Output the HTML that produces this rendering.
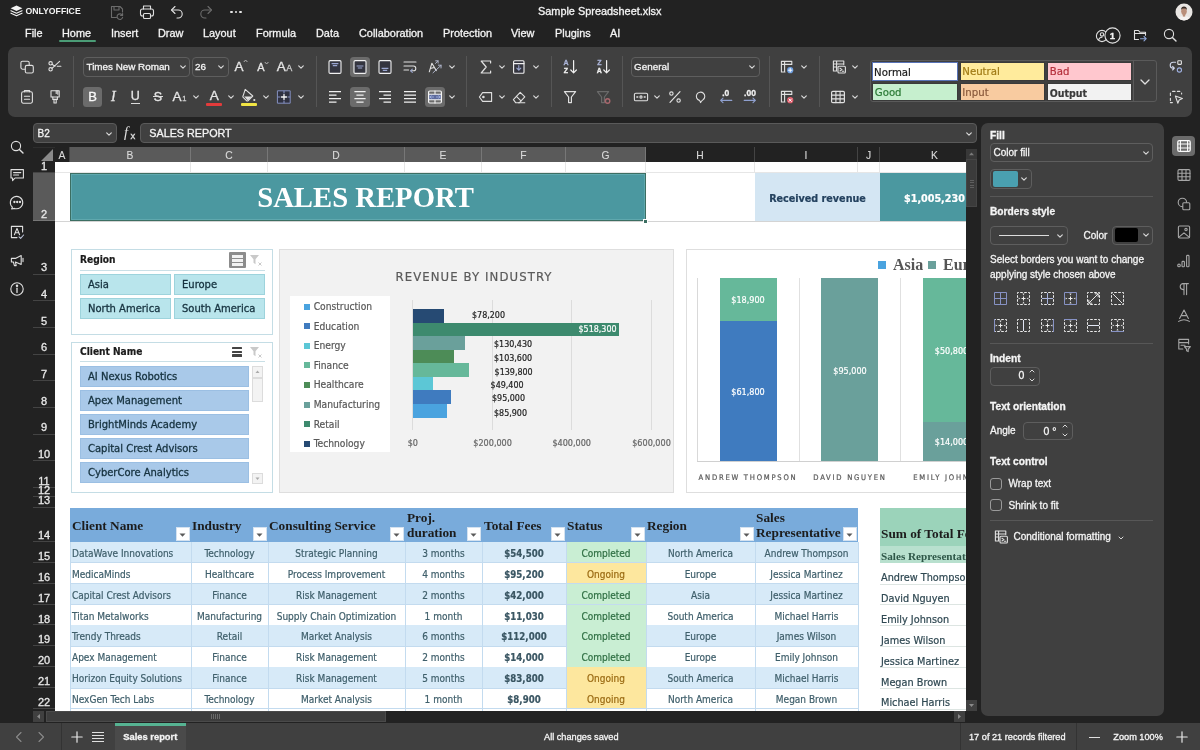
<!DOCTYPE html><html><head><meta charset="utf-8"><title>Sample Spreadsheet.xlsx</title><style>
*{box-sizing:border-box;margin:0;padding:0}
html,body{width:1200px;height:750px;overflow:hidden;background:#222;font-family:"Liberation Sans",sans-serif;color:#e6e6e6;font-size:11px}
.a{position:absolute}
.ui{font-family:"Liberation Sans",sans-serif;color:#ececec;white-space:nowrap;font-size:11px;-webkit-text-stroke:0.3px}
.sh{font-family:"DejaVu Sans Condensed","DejaVu Sans",sans-serif;white-space:nowrap;color:#3f5f6b;font-size:10px;-webkit-text-stroke:0.2px}
.sf{font-family:"Liberation Serif",serif;white-space:nowrap;font-weight:bold;color:#1c1c1c}
.c{text-align:center}
svg{position:absolute;overflow:visible}
.ic{stroke:#e0e0e0;fill:none;stroke-width:1.1;stroke-linecap:round;stroke-linejoin:round}
#root{position:absolute;left:0;top:0;width:1200px;height:750px;will-change:transform}
#sheet{position:absolute;left:0;top:0;width:966px;height:711px;overflow:hidden}
</style></head><body><div id="root">
<svg style="left:10px;top:5px" width="13" height="12" viewBox="0 0 13 12"><path d="M6.5 0.6L12.4 3.3L6.5 6L0.6 3.3Z" fill="#f2f2f2"/><path d="M1 5.7L6.5 8.2L12 5.7M1 8.2L6.5 10.8L12 8.2" fill="none" stroke="#f2f2f2" stroke-width="1.2" stroke-linejoin="round" stroke-linecap="round"/></svg>
<div class="a ui" style="left:25.5px;top:6px;font-size:8.7px;font-weight:bold;color:#f4f4f4;line-height:11px;-webkit-text-stroke:0">ONLYOFFICE</div>
<svg class="ic" style="left:107.0px;top:1.5px;" width="20" height="20" viewBox="0 0 20 20"><g stroke="#6c6c6c"><path d="M4.5 4.5h8.5l2.5 2.5v3M4.5 4.5v11h5"/><path d="M7 4.5v3.5h5v-3.5"/><path d="M15.3 13.2a2.8 2.8 0 1 0 .3 2.2M15.6 11.5v2h-2"/></g></svg>
<svg class="ic" style="left:137.0px;top:1.5px;" width="20" height="20" viewBox="0 0 20 20"><rect x="3.5" y="7" width="13" height="7" rx="2"/><path d="M6.5 7v-3h7v3"/><rect x="6.5" y="11.5" width="7" height="5" rx="1" fill="#222"/></svg>
<svg class="ic" style="left:167.0px;top:1.5px;" width="20" height="20" viewBox="0 0 20 20"><path d="M8 4.5L4.5 8L8 11.5"/><path d="M4.8 8h6.4a4 4 0 0 1 0 8h-1.2"/></svg>
<svg class="ic" style="left:196.0px;top:1.5px;" width="20" height="20" viewBox="0 0 20 20"><g stroke="#6c6c6c"><path d="M12 4.5L15.5 8L12 11.5"/><path d="M15.2 8h-6.4a4 4 0 0 0 0 8h1.2"/></g></svg>
<div class="a" style="left:230.3px;top:10.6px;width:2.4px;height:2.4px;background:#e6e6e6;border-radius:1.2px"></div>
<div class="a" style="left:234.8px;top:10.6px;width:2.4px;height:2.4px;background:#e6e6e6;border-radius:1.2px"></div>
<div class="a" style="left:239.3px;top:10.6px;width:2.4px;height:2.4px;background:#e6e6e6;border-radius:1.2px"></div>
<div class="a ui" style="left:538px;top:5px;font-size:10.9px;color:#f4f4f4;line-height:13px">Sample Spreadsheet.xlsx</div>
<svg style="left:1174.5px;top:3px" width="18" height="18" viewBox="0 0 18 18"><defs><clipPath id="av"><circle cx="9" cy="9" r="8.5"/></clipPath></defs><circle cx="9" cy="9" r="8.5" fill="#e9e6e3"/><g clip-path="url(#av)"><path d="M3 18c0-4 2.5-5 6-5s6 1 6 5z" fill="#f4f2f0"/><ellipse cx="9" cy="8.3" rx="2.8" ry="3.6" fill="#b98f7a"/><path d="M6 7.2c0-3 1.4-3.8 3-3.8s3 .8 3 3.8c-.6-1.2-1.6-1.6-3-1.6s-2.4.4-3 1.6z" fill="#3a2c26"/><rect x="7.8" y="11" width="2.4" height="2.6" fill="#b98f7a"/></g></svg>
<div class="a ui" style="left:25px;top:26.5px;font-size:10.9px;color:#f4f4f4;line-height:13px">File</div>
<div class="a ui" style="left:62px;top:26.5px;font-size:10.9px;color:#f4f4f4;line-height:13px">Home</div>
<div class="a ui" style="left:111px;top:26.5px;font-size:10.9px;color:#f4f4f4;line-height:13px">Insert</div>
<div class="a ui" style="left:158px;top:26.5px;font-size:10.9px;color:#f4f4f4;line-height:13px">Draw</div>
<div class="a ui" style="left:203px;top:26.5px;font-size:10.9px;color:#f4f4f4;line-height:13px">Layout</div>
<div class="a ui" style="left:256px;top:26.5px;font-size:10.9px;color:#f4f4f4;line-height:13px">Formula</div>
<div class="a ui" style="left:316px;top:26.5px;font-size:10.9px;color:#f4f4f4;line-height:13px">Data</div>
<div class="a ui" style="left:359px;top:26.5px;font-size:10.9px;color:#f4f4f4;line-height:13px">Collaboration</div>
<div class="a ui" style="left:443px;top:26.5px;font-size:10.9px;color:#f4f4f4;line-height:13px">Protection</div>
<div class="a ui" style="left:511px;top:26.5px;font-size:10.9px;color:#f4f4f4;line-height:13px">View</div>
<div class="a ui" style="left:555px;top:26.5px;font-size:10.9px;color:#f4f4f4;line-height:13px">Plugins</div>
<div class="a ui" style="left:610px;top:26.5px;font-size:10.9px;color:#f4f4f4;line-height:13px">AI</div>
<div class="a" style="left:58.5px;top:40.2px;width:37px;height:2px;background:#4b9c76;border-radius:1px"></div>
<svg class="ic" style="left:1091.5px;top:25.5px;" width="20" height="20" viewBox="0 0 20 20"><circle cx="10" cy="10" r="5.6"/><circle cx="10" cy="8.4" r="1.7"/><path d="M6.6 13.8c.6-2 2-2.6 3.4-2.6"/></svg>
<svg style="left:1104px;top:27px" width="17" height="17"><circle cx="8.5" cy="8.5" r="7.6" fill="#222" stroke="#e2e2e2" stroke-width="1.1"/></svg>
<div class="a ui c" style="left:1097.3px;top:25.5px;width:30px;height:20px;line-height:20px;font-size:9.5px;font-weight:bold;color:#f0f0f0">1</div>
<svg class="ic" style="left:1130.0px;top:25.0px;" width="20" height="20" viewBox="0 0 20 20"><path d="M4.5 14.5v-9h4l1.5 1.8h5.5v3"/><path d="M4.5 8.5h11"/><path d="M4.5 14.5h4"/><path d="M10.5 13.7h5.5m-2-2.2l2.2 2.2l-2.2 2.2" stroke="#8fa6d8"/></svg>
<svg class="ic" style="left:1159.5px;top:24.5px;" width="20" height="20" viewBox="0 0 20 20"><circle cx="9" cy="9" r="4.6"/><path d="M12.4 12.4L16 16" stroke-width="1.4"/></svg>
<div class="a" style="left:8px;top:47px;width:1184px;height:70px;background:#404040;border-radius:7px"></div>
<svg class="ic" style="left:16.7px;top:56.599999999999994px;" width="20" height="20" viewBox="0 0 20 20"><rect x="3.9" y="4.2" width="8.3" height="8" rx="1.6"/><rect x="8.3" y="8.4" width="8" height="7.6" rx="1.6" fill="#404040"/></svg>
<svg class="ic" style="left:45.3px;top:56.3px;" width="20" height="20" viewBox="0 0 20 20"><circle cx="5.6" cy="7.3" r="1.7"/><circle cx="5.6" cy="13.3" r="1.7"/><path d="M7 8.3L10 10.2M7 12.3L14.6 5.4M12.3 10.3h3.6"/></svg>
<svg class="ic" style="left:16.5px;top:86.7px;" width="20" height="20" viewBox="0 0 20 20"><rect x="4.6" y="4.8" width="10.8" height="11.4" rx="1.6"/><path d="M7.4 4.8v-1.3h5.2v1.3" /><path d="M7.4 9.3h5.2M7.4 12.3h5.2"/></svg>
<svg class="ic" style="left:44.7px;top:86.5px;" width="20" height="20" viewBox="0 0 20 20"><path d="M6 3.8h8.2v6.2h-8.2z"/><path d="M11.2 3.8v2.6M12.8 3.8v3.4"/><path d="M7.8 10v2.4h4.6v-2.4"/><path d="M9 12.4v3.6h2.2v-3.6"/></svg>
<div class="a" style="left:72.8px;top:56px;width:1px;height:51px;background:#555"></div>
<div class="a" style="left:82.5px;top:57px;width:107px;height:19.5px;border:1px solid #5e5e5e;border-radius:4px"></div>
<div class="a ui" style="left:86.5px;top:60px;font-size:9.85px;line-height:13px;color:#f4f4f4">Times New Roman</div>
<svg style="left:177.7px;top:61.7px" width="10" height="10" viewBox="0 0 10 10"><path d="M2.7 3.85L5 6.15L7.3 3.85" fill="none" stroke="#d8d8d8" stroke-width="1.2" stroke-linecap="round" stroke-linejoin="round"/></svg>
<div class="a" style="left:192px;top:57px;width:37px;height:19.5px;border:1px solid #5e5e5e;border-radius:4px"></div>
<div class="a ui" style="left:195px;top:60px;font-size:9.9px;line-height:13px;color:#f4f4f4">26</div>
<svg style="left:216.3px;top:61.7px" width="10" height="10" viewBox="0 0 10 10"><path d="M2.7 3.85L5 6.15L7.3 3.85" fill="none" stroke="#d8d8d8" stroke-width="1.2" stroke-linecap="round" stroke-linejoin="round"/></svg>
<div class="a ui c" style="left:224px;top:56.5px;width:30px;height:20px;line-height:20px;font-size:13.5px;color:#e6e6e6">A</div>
<svg style="left:242.5px;top:59px" width="6" height="4"><path d="M0.8 3L2.6 1L4.4 3" fill="none" stroke="#bdbdbd" stroke-width="0.9"/></svg>
<div class="a ui c" style="left:246px;top:57.3px;width:30px;height:20px;line-height:20px;font-size:11px;color:#e6e6e6">A</div>
<svg style="left:263.5px;top:60.5px" width="6" height="4"><path d="M0.8 1L2.6 3L4.4 1" fill="none" stroke="#bdbdbd" stroke-width="0.9"/></svg>
<div class="a ui c" style="left:266.3px;top:56.5px;width:30px;height:20px;line-height:20px;font-size:13.5px;color:#e6e6e6">A</div>
<div class="a ui c" style="left:274.3px;top:58px;width:30px;height:20px;line-height:20px;font-size:9px;color:#cfcfcf">A</div>
<svg style="left:295.7px;top:61.7px" width="10" height="10" viewBox="0 0 10 10"><path d="M2.7 3.85L5 6.15L7.3 3.85" fill="none" stroke="#d8d8d8" stroke-width="1.2" stroke-linecap="round" stroke-linejoin="round"/></svg>
<div class="a" style="left:82.7px;top:86.6px;width:19.8px;height:20px;background:#6b6b6b;border-radius:3.5px"></div>
<div class="a ui c" style="left:77.6px;top:86.7px;width:30px;height:20px;line-height:20px;font-size:13px;color:#fafafa">B</div>
<div class="a ui c" style="left:98.3px;top:86.5px;width:30px;height:20px;line-height:20px;font-size:14px;font-style:italic;font-family:'Liberation Serif',serif;color:#e6e6e6">I</div>
<div class="a ui c" style="left:120.30000000000001px;top:86px;width:30px;height:20px;line-height:20px;font-size:12.5px;color:#e6e6e6">U</div>
<div class="a" style="left:131px;top:103.2px;width:8.6px;height:1px;background:#dcdcdc"></div>
<div class="a ui c" style="left:143px;top:86.5px;width:30px;height:20px;line-height:20px;font-size:12.5px;color:#e6e6e6">S</div>
<div class="a" style="left:152.6px;top:96.3px;width:10.8px;height:1px;background:#dcdcdc"></div>
<div class="a ui c" style="left:162px;top:86.5px;width:30px;height:20px;line-height:20px;font-size:13.5px;color:#e6e6e6">A</div>
<div class="a ui c" style="left:169.3px;top:89px;width:30px;height:20px;line-height:20px;font-size:7.5px;color:#cfcfcf">1</div>
<svg style="left:190.7px;top:91.7px" width="10" height="10" viewBox="0 0 10 10"><path d="M2.7 3.85L5 6.15L7.3 3.85" fill="none" stroke="#d8d8d8" stroke-width="1.2" stroke-linecap="round" stroke-linejoin="round"/></svg>
<div class="a ui c" style="left:199.3px;top:86.4px;width:30px;height:20px;line-height:20px;font-size:13.5px;color:#e6e6e6">A</div>
<div class="a" style="left:206px;top:103.4px;width:16px;height:2.8px;background:#e23b3b;border-radius:1px"></div>
<svg style="left:225.7px;top:91.7px" width="10" height="10" viewBox="0 0 10 10"><path d="M2.7 3.85L5 6.15L7.3 3.85" fill="none" stroke="#d8d8d8" stroke-width="1.2" stroke-linecap="round" stroke-linejoin="round"/></svg>
<svg class="ic" style="left:238.7px;top:85.5px;" width="20" height="20" viewBox="0 0 20 20"><path d="M6.2 3.4l7.6 6.6l-4.6 4.6a1.2 1.2 0 0 1-1.7 0l-3.3-3.3a1.2 1.2 0 0 1 0-1.7z"/><path d="M5.2 10.6h7.6l-4 4z" fill="#e2e2e2" stroke="none"/><circle cx="15.3" cy="14" r="1.1" fill="#e2e2e2" stroke="none"/></svg>
<div class="a" style="left:241.3px;top:103.4px;width:15.8px;height:2.8px;background:#f1e443;border-radius:1px"></div>
<svg style="left:260.6px;top:91.7px" width="10" height="10" viewBox="0 0 10 10"><path d="M2.7 3.85L5 6.15L7.3 3.85" fill="none" stroke="#d8d8d8" stroke-width="1.2" stroke-linecap="round" stroke-linejoin="round"/></svg>
<svg class="ic" style="left:273.7px;top:86.5px;" width="20" height="20" viewBox="0 0 20 20"><rect x="3.8" y="3.8" width="12.4" height="12.4" stroke="#8490c0" stroke-width="1" fill="#2f3140"/><path d="M10 3.8v2.4M10 13.800v2.400M3.800 10h2.400M13.800 10h2.400" stroke="#8490c0" stroke-linecap="butt"/><path d="M10 7.400v5.200M7.400 10h5.200" stroke="#f4f4f4" stroke-width="1.3"/></svg>
<svg style="left:295.7px;top:91.7px" width="10" height="10" viewBox="0 0 10 10"><path d="M2.7 3.85L5 6.15L7.3 3.85" fill="none" stroke="#d8d8d8" stroke-width="1.2" stroke-linecap="round" stroke-linejoin="round"/></svg>
<div class="a" style="left:316.1px;top:56px;width:1px;height:51px;background:#555"></div>
<svg class="ic" style="left:325.0px;top:56.5px;" width="20" height="20" viewBox="0 0 20 20"><rect x="4" y="3.6" width="12" height="12.8" rx="1.2" stroke="#f0f0f0" fill="#34353f"/><path d="M6.6 6.6h6.8M7.8 8.6h4.4" stroke="#9aa6d0" stroke-width="1.2" stroke-linecap="butt"/></svg>
<div class="a" style="left:350px;top:56.6px;width:20px;height:20px;background:#6b6b6b;border-radius:3.5px"></div>
<svg class="ic" style="left:350.0px;top:56.5px;" width="20" height="20" viewBox="0 0 20 20"><rect x="4" y="3.6" width="12" height="12.8" rx="1.2" stroke="#f0f0f0" fill="#34353f"/><path d="M6.6 9h6.8M7.8 11h4.4" stroke="#9aa6d0" stroke-width="1.2" stroke-linecap="butt"/></svg>
<svg class="ic" style="left:375.0px;top:56.5px;" width="20" height="20" viewBox="0 0 20 20"><rect x="4" y="3.6" width="12" height="12.8" rx="1.2" stroke="#f0f0f0" fill="#34353f"/><path d="M6.6 11.4h6.8M7.8 13.4h4.4" stroke="#9aa6d0" stroke-width="1.2" stroke-linecap="butt"/></svg>
<svg class="ic" style="left:400.0px;top:56.5px;" width="20" height="20" viewBox="0 0 20 20"><path d="M4 5h12M4 9h9.4a2.4 2.4 0 0 1 0 4.8h-2.6M4 13h4.6"/><path d="M12.3 12.2l-1.6 1.6l1.6 1.6" stroke="#9aa6d0"/></svg>
<svg class="ic" style="left:424.5px;top:56.5px;" width="20" height="20" viewBox="0 0 20 20"><path d="M4.3 14.8l2.6-8.6l4.4 7.4M5.3 11.6l3.8-1.2"/><path d="M8 15.8l8-7.4m-2.6-.2l2.8 0l-.2 2.8M10.6 6.4l2.4-2.6m-2.3 0h2.4v2.3" stroke="#b9c0d6" stroke-width="0.9"/></svg>
<svg style="left:446.6px;top:61.7px" width="10" height="10" viewBox="0 0 10 10"><path d="M2.7 3.85L5 6.15L7.3 3.85" fill="none" stroke="#d8d8d8" stroke-width="1.2" stroke-linecap="round" stroke-linejoin="round"/></svg>
<svg class="ic" style="left:325.0px;top:86.5px;" width="20" height="20" viewBox="0 0 20 20"><path d="M4 4.6H16M4 8.1H11.5M4 11.6H16M4 15.1H11.5" stroke="#f0f0f0" stroke-width="1.25" stroke-linecap="butt"/></svg>
<div class="a" style="left:350px;top:86.6px;width:20px;height:20px;background:#6b6b6b;border-radius:3.5px"></div>
<svg class="ic" style="left:350.0px;top:86.5px;" width="20" height="20" viewBox="0 0 20 20"><path d="M4.4 4.6H15.6M6.4 8.1H13.6M4.4 11.6H15.6M6.4 15.1H13.6" stroke="#f0f0f0" stroke-width="1.25" stroke-linecap="butt"/></svg>
<svg class="ic" style="left:375.0px;top:86.5px;" width="20" height="20" viewBox="0 0 20 20"><path d="M4 4.6H16M8.5 8.1H16M4 11.6H16M8.5 15.1H16" stroke="#f0f0f0" stroke-width="1.25" stroke-linecap="butt"/></svg>
<svg class="ic" style="left:400.0px;top:86.5px;" width="20" height="20" viewBox="0 0 20 20"><path d="M4 4.6H16M4 8.1H16M4 11.6H16M4 15.1H16" stroke="#f0f0f0" stroke-width="1.25" stroke-linecap="butt"/></svg>
<div class="a" style="left:425px;top:86.6px;width:20px;height:20px;background:#6b6b6b;border-radius:3.5px"></div>
<svg class="ic" style="left:425.0px;top:86.5px;" width="20" height="20" viewBox="0 0 20 20"><rect x="3.600" y="7.200" width="12.800" height="5.600" fill="#5d6a9c" stroke="none"/><rect x="3.6" y="4" width="12.8" height="12" rx="1.2" stroke="#f4f4f4" stroke-width="1.2"/><path d="M3.6 7.2h12.8M3.6 12.8h12.8M10 4v3.2M10 12.8v3.2" stroke="#f4f4f4"/><path d="M5 10h3.6M11.4 10h3.6M6.2 8.8L5 10l1.2 1.2M13.8 8.8L15 10l-1.2 1.2" stroke="#9fb0e0" stroke-width="0.9"/></svg>
<svg style="left:446.6px;top:91.7px" width="10" height="10" viewBox="0 0 10 10"><path d="M2.7 3.85L5 6.15L7.3 3.85" fill="none" stroke="#d8d8d8" stroke-width="1.2" stroke-linecap="round" stroke-linejoin="round"/></svg>
<div class="a" style="left:466.2px;top:56px;width:1px;height:51px;background:#555"></div>
<svg class="ic" style="left:476.0px;top:56.5px;" width="20" height="20" viewBox="0 0 20 20"><path d="M14.6 6v-2H5.2l5 6l-5 6h9.4v-2" stroke-width="1.2"/></svg>
<svg style="left:497.4px;top:61.7px" width="10" height="10" viewBox="0 0 10 10"><path d="M2.7 3.85L5 6.15L7.3 3.85" fill="none" stroke="#d8d8d8" stroke-width="1.2" stroke-linecap="round" stroke-linejoin="round"/></svg>
<svg class="ic" style="left:508.70000000000005px;top:56.5px;" width="20" height="20" viewBox="0 0 20 20"><rect x="4.6" y="3.8" width="10.4" height="12.4" rx="1" stroke="#f0f0f0" fill="#34353f"/><path d="M4.6 6.6h10.4" stroke="#f0f0f0"/><path d="M9.8 8.6v4.6M7.8 11.2l2 2l2-2" stroke="#9aa6d0"/></svg>
<svg style="left:530.7px;top:61.7px" width="10" height="10" viewBox="0 0 10 10"><path d="M2.7 3.85L5 6.15L7.3 3.85" fill="none" stroke="#d8d8d8" stroke-width="1.2" stroke-linecap="round" stroke-linejoin="round"/></svg>
<svg class="ic" style="left:476.0px;top:86.5px;" width="20" height="20" viewBox="0 0 20 20"><path d="M3.4 10l3.2-4.4h9v8.8h-9z"/><circle cx="7.4" cy="10" r="0.7" fill="#e2e2e2"/></svg>
<svg style="left:497.4px;top:91.7px" width="10" height="10" viewBox="0 0 10 10"><path d="M2.7 3.85L5 6.15L7.3 3.85" fill="none" stroke="#d8d8d8" stroke-width="1.2" stroke-linecap="round" stroke-linejoin="round"/></svg>
<svg class="ic" style="left:508.70000000000005px;top:86.5px;" width="20" height="20" viewBox="0 0 20 20"><path d="M4.4 12.6l6.8-7.2l4.6 4.4l-5.6 6h-3.4z"/><path d="M7.4 9.4l4.6 4.4M9.6 15.8h6.2"/></svg>
<svg style="left:530.7px;top:91.7px" width="10" height="10" viewBox="0 0 10 10"><path d="M2.7 3.85L5 6.15L7.3 3.85" fill="none" stroke="#d8d8d8" stroke-width="1.2" stroke-linecap="round" stroke-linejoin="round"/></svg>
<div class="a" style="left:550.8px;top:56px;width:1px;height:51px;background:#555"></div>
<div class="a ui c" style="left:551px;top:52.6px;width:30px;height:20px;line-height:20px;font-size:7px;font-weight:bold;color:#aab3d6">A</div>
<div class="a ui c" style="left:551px;top:60.599999999999994px;width:30px;height:20px;line-height:20px;font-size:7px;font-weight:bold;color:#f0f0f0">Z</div>
<svg class="ic" style="left:560.0px;top:56.5px;" width="20" height="20" viewBox="0 0 20 20"><path d="M13.6 3.6v12M10.8 13l2.8 2.8l2.8-2.8" stroke="#f0f0f0" stroke-width="1.2"/></svg>
<div class="a ui c" style="left:584.3px;top:52.6px;width:30px;height:20px;line-height:20px;font-size:7px;font-weight:bold;color:#aab3d6">Z</div>
<div class="a ui c" style="left:584.3px;top:60.599999999999994px;width:30px;height:20px;line-height:20px;font-size:7px;font-weight:bold;color:#f0f0f0">A</div>
<svg class="ic" style="left:593.3px;top:56.5px;" width="20" height="20" viewBox="0 0 20 20"><path d="M13.6 3.6v12M10.8 13l2.8 2.8l2.8-2.8" stroke="#f0f0f0" stroke-width="1.2"/></svg>
<svg class="ic" style="left:560.0px;top:86.5px;" width="20" height="20" viewBox="0 0 20 20"><path d="M4.4 4.6h11.2l-4.2 5.4v5.6h-2.8v-5.6z" stroke-width="1.2"/></svg>
<svg class="ic" style="left:593.3px;top:86.5px;" width="20" height="20" viewBox="0 0 20 20"><path d="M4.4 4.6h11.2l-4.2 5.4v5.6h-2.8v-5.6z" stroke="#6a6a6a" stroke-width="1.2"/><circle cx="14.6" cy="14" r="2.2" stroke="#a8676d" stroke-width="1.4"/></svg>
<div class="a" style="left:621.8px;top:56px;width:1px;height:51px;background:#555"></div>
<div class="a" style="left:631px;top:57px;width:129px;height:19.5px;border:1px solid #5e5e5e;border-radius:4px"></div>
<div class="a ui" style="left:634px;top:60px;font-size:9.9px;line-height:13px;color:#f4f4f4">General</div>
<svg style="left:747.4px;top:61.7px" width="10" height="10" viewBox="0 0 10 10"><path d="M2.7 3.85L5 6.15L7.3 3.85" fill="none" stroke="#d8d8d8" stroke-width="1.2" stroke-linecap="round" stroke-linejoin="round"/></svg>
<svg class="ic" style="left:630.7px;top:86.5px;" width="20" height="20" viewBox="0 0 20 20"><rect x="3.4" y="6.2" width="13.2" height="7.6" rx="1.4"/><circle cx="10" cy="10" r="1.1"/><path d="M5.8 10h1M13.2 10h1" stroke-width="1.3"/></svg>
<svg style="left:652.3px;top:91.7px" width="10" height="10" viewBox="0 0 10 10"><path d="M2.7 3.85L5 6.15L7.3 3.85" fill="none" stroke="#d8d8d8" stroke-width="1.2" stroke-linecap="round" stroke-linejoin="round"/></svg>
<svg class="ic" style="left:665.0px;top:86.5px;" width="20" height="20" viewBox="0 0 20 20"><path d="M5 15.4l10-10.8" stroke-width="1.2"/><circle cx="6.4" cy="6.6" r="1.7"/><circle cx="13.6" cy="13.6" r="1.7"/></svg>
<svg class="ic" style="left:690.0px;top:86.5px;" width="20" height="20" viewBox="0 0 20 20"><path d="M10.6 15.6c-.2-1.2-.8-1.8-1.2-2.2a4.2 4.2 0 1 1 3.6-.6c-.9.6-1.9 1.2-2.4 2.800z"/></svg>
<div class="a ui c" style="left:710.8px;top:83.3px;width:30px;height:20px;line-height:20px;font-size:8.5px;color:#f0f0f0;font-weight:bold">.0</div>
<svg class="ic" style="left:715.8px;top:86.5px;" width="20" height="20" viewBox="0 0 20 20"><path d="M15.8 13.4h-11M7 11.2l-2.4 2.2l2.400 2.200" stroke="#8fa0cf"/></svg>
<div class="a ui c" style="left:735px;top:83.3px;width:30px;height:20px;line-height:20px;font-size:8.5px;color:#f0f0f0;font-weight:bold">.00</div>
<svg class="ic" style="left:740.0px;top:86.5px;" width="20" height="20" viewBox="0 0 20 20"><path d="M4.2 13.4h11M13 11.2l2.4 2.2l-2.400 2.200" stroke="#8fa0cf"/></svg>
<div class="a" style="left:769.1px;top:56px;width:1px;height:51px;background:#555"></div>
<svg class="ic" style="left:777.3px;top:56.5px;" width="20" height="20" viewBox="0 0 20 20"><path d="M4.400 4.400h10.400v3M4.400 4.400v10.600h3.600M4.400 7.400h10.400M7.600 4.400v10.600"/><circle cx="13.200" cy="13.200" r="3.100" fill="#6f9fe0" stroke="none"/><path d="M13.200 11.500v3.400M11.500 13.200h3.400" stroke="#fff" stroke-width="1"/></svg>
<svg style="left:799px;top:61.7px" width="10" height="10" viewBox="0 0 10 10"><path d="M2.7 3.85L5 6.15L7.3 3.85" fill="none" stroke="#d8d8d8" stroke-width="1.2" stroke-linecap="round" stroke-linejoin="round"/></svg>
<svg class="ic" style="left:777.3px;top:86.5px;" width="20" height="20" viewBox="0 0 20 20"><path d="M4.400 4.400h10.400v3M4.400 4.400v10.600h3.600M4.400 7.400h10.400M7.600 4.400v10.600"/><circle cx="13.200" cy="13.200" r="3.100" fill="#e0606e" stroke="none"/><path d="M12 12l2.400 2.400M14.400 12l-2.400 2.400" stroke="#fff" stroke-width="1"/></svg>
<svg style="left:799px;top:91.7px" width="10" height="10" viewBox="0 0 10 10"><path d="M2.7 3.85L5 6.15L7.3 3.85" fill="none" stroke="#d8d8d8" stroke-width="1.2" stroke-linecap="round" stroke-linejoin="round"/></svg>
<div class="a" style="left:819.2px;top:56px;width:1px;height:51px;background:#555"></div>
<svg class="ic" style="left:829.0px;top:56.5px;" width="20" height="20" viewBox="0 0 20 20"><path d="M14.800 7.600v-3.600h-10.400v10h3.600M4.400 7h10.400M4.400 10h3.600M7.600 4v10"/><rect x="9" y="9.200" width="7.400" height="6.800" rx="1" fill="#404040"/><path d="M11 11.200l2 1.400l-2 1.400M13.400 14.200h1.400"/></svg>
<svg style="left:850px;top:61.7px" width="10" height="10" viewBox="0 0 10 10"><path d="M2.7 3.85L5 6.15L7.3 3.85" fill="none" stroke="#d8d8d8" stroke-width="1.2" stroke-linecap="round" stroke-linejoin="round"/></svg>
<svg class="ic" style="left:828.0px;top:86.5px;" width="20" height="20" viewBox="0 0 20 20"><rect x="3.600" y="4.400" width="12.800" height="11.200" rx="1.200" stroke-width="1.200"/><path d="M3.600 8.100h12.800M3.600 11.900h12.800M7.900 4.400v11.200M12.100 4.400v11.200"/></svg>
<svg style="left:850px;top:91.7px" width="10" height="10" viewBox="0 0 10 10"><path d="M2.7 3.85L5 6.15L7.3 3.85" fill="none" stroke="#d8d8d8" stroke-width="1.2" stroke-linecap="round" stroke-linejoin="round"/></svg>
<div class="a" style="left:870px;top:60px;width:287px;height:42px;border:1px solid #5a5a5a;border-radius:3px"></div>
<div class="a sh" style="left:871.5px;top:61.5px;width:86.5px;height:19.5px;background:#ffffff;border:1.5px solid #5873b8;color:#1a1a1a;font-size:11.3px;line-height:19.1px;padding-left:1.6px;">Normal</div>
<div class="a sh" style="left:872px;top:83px;width:85.5px;height:18px;background:#c6efce;border:1px solid #3a3a3a;color:#2b7a36;font-size:11.3px;line-height:18px;padding-left:1.8px;">Good</div>
<div class="a sh" style="left:959.5px;top:62px;width:85.5px;height:18.5px;background:#ffeb9c;border:1px solid #3a3a3a;color:#a07a14;font-size:11.3px;line-height:18.5px;padding-left:1.8px;">Neutral</div>
<div class="a sh" style="left:959.5px;top:83px;width:85.5px;height:18px;background:#f8cba0;border:1px solid #3a3a3a;color:#8a5a3c;font-size:11.3px;line-height:18px;padding-left:1.8px;">Input</div>
<div class="a sh" style="left:1047px;top:62px;width:84.5px;height:18.5px;background:#ffc7ce;border:1px solid #3a3a3a;color:#b5303c;font-size:11.3px;line-height:18.5px;padding-left:1.8px;">Bad</div>
<div class="a sh" style="left:1047px;top:83px;width:84.5px;height:18px;background:#f2f2f2;border:1px solid #3a3a3a;color:#3a3a3a;font-size:10.5px;line-height:18px;padding-left:1.8px;font-weight:bold;">Output</div>
<div class="a" style="left:1133px;top:60.5px;width:1px;height:41px;background:#5a5a5a"></div>
<svg style="left:1139.7px;top:76.7px" width="10" height="10" viewBox="0 0 10 10"><path d="M1 3.0L5 7.0L9 3.0" fill="none" stroke="#e0e0e0" stroke-width="1.3" stroke-linecap="round" stroke-linejoin="round"/></svg>
<svg class="ic" style="left:1165.8px;top:56.7px;" width="20" height="20" viewBox="0 0 20 20"><path d="M9.600 5.200h-2.400a3 3 0 0 0 0 6h.8M6.600 9.400l1.800 1.800l-1.800 1.800" stroke="#d0d6ea"/><rect x="11.800" y="3.800" width="3.600" height="3.600" rx=".6"/><circle cx="13.400" cy="13" r="2.100" stroke="#9fb0e0"/></svg>
<svg class="ic" style="left:1165.8px;top:86.7px;" width="20" height="20" viewBox="0 0 20 20"><path d="M4.400 8.400v-2.400M4.400 13.600v-2.400M6.600 4.400h2.400M11.400 4.400h2.400M15.600 6v1M4.400 15.600h2" /><path d="M9.400 9l7 2.600l-3.200 1.400l-1.400 3.200z" stroke-width="1.100"/></svg>
<div class="a" style="left:33px;top:123px;width:84px;height:20px;background:#404040;border:1px solid #5a5a5a;border-radius:4px"></div>
<div class="a ui" style="left:37.5px;top:127px;font-size:10px;line-height:13px;color:#f4f4f4">B2</div>
<svg style="left:103.7px;top:128.5px" width="10" height="10" viewBox="0 0 10 10"><path d="M2.7 3.85L5 6.15L7.3 3.85" fill="none" stroke="#d8d8d8" stroke-width="1.2" stroke-linecap="round" stroke-linejoin="round"/></svg>
<div class="a" style="left:124px;top:123px;width:14px;height:20px;font-family:'Liberation Serif',serif;font-style:italic;font-size:14.500px;line-height:19px;color:#e0e0e0">f</div>
<div class="a ui" style="left:130.5px;top:131px;font-size:9.500px;line-height:10px;color:#e0e0e0">x</div>
<div class="a" style="left:140px;top:123px;width:837px;height:20px;background:#404040;border:1px solid #5a5a5a;border-radius:4px"></div>
<div class="a ui" style="left:149.3px;top:127px;font-size:10.77px;line-height:13px;color:#f4f4f4">SALES REPORT</div>
<svg style="left:963.7px;top:128.5px" width="10" height="10" viewBox="0 0 10 10"><path d="M2.7 3.85L5 6.15L7.3 3.85" fill="none" stroke="#d8d8d8" stroke-width="1.2" stroke-linecap="round" stroke-linejoin="round"/></svg>
<svg class="ic" style="left:6.5px;top:136.5px;" width="20" height="20" viewBox="0 0 20 20"><circle cx="9" cy="9" r="4.600"/><path d="M12.400 12.400L16 16" stroke-width="1.400"/></svg>
<svg class="ic" style="left:6.5px;top:165.0px;" width="20" height="20" viewBox="0 0 20 20"><path d="M4 4.600h12.400v8.400h-8.400l-2.400 2.600v-2.600h-1.600z"/><path d="M6.600 7.600h7.200M6.600 10h5"/></svg>
<svg class="ic" style="left:6.5px;top:192.3px;" width="20" height="20" viewBox="0 0 20 20"><path d="M5.400 15.200a6.200 6.200 0 1 1 2 1.200l-2.800.6z"/><circle cx="7.400" cy="10" r=".600" fill="#e2e2e2"/><circle cx="10.200" cy="10" r=".600" fill="#e2e2e2"/><circle cx="13" cy="10" r=".600" fill="#e2e2e2"/></svg>
<svg class="ic" style="left:6.5px;top:222.0px;" width="20" height="20" viewBox="0 0 20 20"><path d="M15.600 10v-5.600h-11.200v11.200h5.600"/><path d="M7.400 12.800l2.600-6.400l2.600 6.400M8.300 10.800h3.400"/><path d="M12 14.800l1.600 1.600l3-3.400" stroke="#b9c0d6"/></svg>
<svg class="ic" style="left:6.5px;top:250.0px;" width="20" height="20" viewBox="0 0 20 20"><path d="M4.400 8.400v3.600l2 0l1 3.600h1.800l-.8-3.600l5.800 2.400v-8.800l-5.800 2.800z"/><path d="M16 8.400v3.200"/></svg>
<svg class="ic" style="left:6.5px;top:278.5px;" width="20" height="20" viewBox="0 0 20 20"><circle cx="10" cy="10" r="6.200"/><path d="M10 9.200v4.200" stroke-width="1.300"/><circle cx="10" cy="6.800" r=".700" fill="#e2e2e2"/></svg>
<div id="sheet">
<div class="a" style="left:55px;top:162px;width:911px;height:549px;background:#fff"></div>
<div class="a" style="left:33px;top:147px;width:933px;height:15px;background:#222;border-top:1px solid #2e2e2e"></div>
<div class="a ui" style="left:55px;top:147px;width:15px;height:15px;background:#222;border-right:1px solid #444;text-align:center;font-size:10.3px;line-height:17.5px;color:#dadada;-webkit-text-stroke:0.1px">A</div>
<div class="a ui" style="left:70px;top:147px;width:121px;height:15px;background:#5a5a5a;border-right:1px solid #777;text-align:center;font-size:10.3px;line-height:17.5px;color:#dadada;-webkit-text-stroke:0.1px">B</div>
<div class="a ui" style="left:191px;top:147px;width:77px;height:15px;background:#5a5a5a;border-right:1px solid #777;text-align:center;font-size:10.3px;line-height:17.5px;color:#dadada;-webkit-text-stroke:0.1px">C</div>
<div class="a ui" style="left:268px;top:147px;width:137px;height:15px;background:#5a5a5a;border-right:1px solid #777;text-align:center;font-size:10.3px;line-height:17.5px;color:#dadada;-webkit-text-stroke:0.1px">D</div>
<div class="a ui" style="left:405px;top:147px;width:77px;height:15px;background:#5a5a5a;border-right:1px solid #777;text-align:center;font-size:10.3px;line-height:17.5px;color:#dadada;-webkit-text-stroke:0.1px">E</div>
<div class="a ui" style="left:482px;top:147px;width:84px;height:15px;background:#5a5a5a;border-right:1px solid #777;text-align:center;font-size:10.3px;line-height:17.5px;color:#dadada;-webkit-text-stroke:0.1px">F</div>
<div class="a ui" style="left:566px;top:147px;width:80px;height:15px;background:#5a5a5a;border-right:1px solid #777;text-align:center;font-size:10.3px;line-height:17.5px;color:#dadada;-webkit-text-stroke:0.1px">G</div>
<div class="a ui" style="left:646px;top:147px;width:109px;height:15px;background:#222;border-right:1px solid #444;text-align:center;font-size:10.3px;line-height:17.5px;color:#dadada;-webkit-text-stroke:0.1px">H</div>
<div class="a ui" style="left:755px;top:147px;width:103px;height:15px;background:#222;border-right:1px solid #444;text-align:center;font-size:10.3px;line-height:17.5px;color:#dadada;-webkit-text-stroke:0.1px">I</div>
<div class="a ui" style="left:858px;top:147px;width:22px;height:15px;background:#222;border-right:1px solid #444;text-align:center;font-size:10.3px;line-height:17.5px;color:#dadada;-webkit-text-stroke:0.1px">J</div>
<div class="a ui" style="left:880px;top:147px;width:110px;height:15px;background:#222;border-right:1px solid #444;text-align:center;font-size:10.3px;line-height:17.5px;color:#dadada;-webkit-text-stroke:0.1px">K</div>
<svg style="left:33px;top:147px" width="22" height="15"><polygon points="20,2 20,14 8,14" fill="#8a8a8a"/></svg>
<div class="a" style="left:33px;top:162px;width:22px;height:549px;background:#222"></div>
<div class="a" style="left:33px;top:162px;width:22px;height:11px;background:#222;border-bottom:1px solid #444"></div>
<div class="a ui c" style="left:33px;top:159.5px;width:22px;font-size:11px;line-height:13px;color:#e8e8e8">1</div>
<div class="a" style="left:33px;top:173px;width:22px;height:48px;background:#5a5a5a;border-bottom:1px solid #777"></div>
<div class="a ui c" style="left:33px;top:207.5px;width:22px;font-size:11px;line-height:13px;color:#e8e8e8">2</div>
<div class="a" style="left:33px;top:221px;width:22px;height:53.5px;background:#222;border-bottom:1px solid #444"></div>
<div class="a ui c" style="left:33px;top:261.0px;width:22px;font-size:11px;line-height:13px;color:#e8e8e8">3</div>
<div class="a" style="left:33px;top:274.5px;width:22px;height:26.5px;background:#222;border-bottom:1px solid #444"></div>
<div class="a ui c" style="left:33px;top:287.5px;width:22px;font-size:11px;line-height:13px;color:#e8e8e8">4</div>
<div class="a" style="left:33px;top:301px;width:22px;height:27px;background:#222;border-bottom:1px solid #444"></div>
<div class="a ui c" style="left:33px;top:314.5px;width:22px;font-size:11px;line-height:13px;color:#e8e8e8">5</div>
<div class="a" style="left:33px;top:328px;width:22px;height:26.5px;background:#222;border-bottom:1px solid #444"></div>
<div class="a ui c" style="left:33px;top:341.0px;width:22px;font-size:11px;line-height:13px;color:#e8e8e8">6</div>
<div class="a" style="left:33px;top:354.5px;width:22px;height:26.5px;background:#222;border-bottom:1px solid #444"></div>
<div class="a ui c" style="left:33px;top:367.5px;width:22px;font-size:11px;line-height:13px;color:#e8e8e8">7</div>
<div class="a" style="left:33px;top:381px;width:22px;height:27px;background:#222;border-bottom:1px solid #444"></div>
<div class="a ui c" style="left:33px;top:394.5px;width:22px;font-size:11px;line-height:13px;color:#e8e8e8">8</div>
<div class="a" style="left:33px;top:408px;width:22px;height:26.5px;background:#222;border-bottom:1px solid #444"></div>
<div class="a ui c" style="left:33px;top:421.0px;width:22px;font-size:11px;line-height:13px;color:#e8e8e8">9</div>
<div class="a" style="left:33px;top:434.5px;width:22px;height:26.5px;background:#222;border-bottom:1px solid #444"></div>
<div class="a ui c" style="left:33px;top:447.5px;width:22px;font-size:11px;line-height:13px;color:#e8e8e8">10</div>
<div class="a" style="left:33px;top:461px;width:22px;height:27px;background:#222;border-bottom:1px solid #444"></div>
<div class="a ui c" style="left:33px;top:474.5px;width:22px;font-size:11px;line-height:13px;color:#e8e8e8">11</div>
<div class="a" style="left:33px;top:488px;width:22px;height:9px;background:#222;border-bottom:1px solid #444"></div>
<div class="a ui c" style="left:33px;top:484px;width:22px;font-size:11px;line-height:13px;color:#e8e8e8">12</div>
<div class="a" style="left:33px;top:497px;width:22px;height:11px;background:#222;border-bottom:1px solid #444"></div>
<div class="a ui c" style="left:33px;top:494px;width:22px;font-size:11px;line-height:13px;color:#e8e8e8">13</div>
<div class="a" style="left:33px;top:508px;width:22px;height:34px;background:#222;border-bottom:1px solid #444"></div>
<div class="a ui c" style="left:33px;top:528.5px;width:22px;font-size:11px;line-height:13px;color:#e8e8e8">14</div>
<div class="a" style="left:33px;top:542.0px;width:22px;height:20.860000000000014px;background:#222;border-bottom:1px solid #444"></div>
<div class="a ui c" style="left:33px;top:550px;width:22px;font-size:11px;line-height:13px;color:#e8e8e8">15</div>
<div class="a" style="left:33px;top:562.86px;width:22px;height:20.860000000000014px;background:#222;border-bottom:1px solid #444"></div>
<div class="a ui c" style="left:33px;top:571px;width:22px;font-size:11px;line-height:13px;color:#e8e8e8">16</div>
<div class="a" style="left:33px;top:583.72px;width:22px;height:20.860000000000014px;background:#222;border-bottom:1px solid #444"></div>
<div class="a ui c" style="left:33px;top:592px;width:22px;font-size:11px;line-height:13px;color:#e8e8e8">17</div>
<div class="a" style="left:33px;top:604.58px;width:22px;height:20.860000000000014px;background:#222;border-bottom:1px solid #444"></div>
<div class="a ui c" style="left:33px;top:613px;width:22px;font-size:11px;line-height:13px;color:#e8e8e8">18</div>
<div class="a" style="left:33px;top:625.44px;width:22px;height:20.8599999999999px;background:#222;border-bottom:1px solid #444"></div>
<div class="a ui c" style="left:33px;top:633px;width:22px;font-size:11px;line-height:13px;color:#e8e8e8">19</div>
<div class="a" style="left:33px;top:646.3px;width:22px;height:20.860000000000014px;background:#222;border-bottom:1px solid #444"></div>
<div class="a ui c" style="left:33px;top:654px;width:22px;font-size:11px;line-height:13px;color:#e8e8e8">20</div>
<div class="a" style="left:33px;top:667.16px;width:22px;height:20.860000000000014px;background:#222;border-bottom:1px solid #444"></div>
<div class="a ui c" style="left:33px;top:675px;width:22px;font-size:11px;line-height:13px;color:#e8e8e8">21</div>
<div class="a" style="left:33px;top:688.02px;width:22px;height:20.860000000000014px;background:#222;border-bottom:1px solid #444"></div>
<div class="a ui c" style="left:33px;top:696px;width:22px;font-size:11px;line-height:13px;color:#e8e8e8">22</div>
<div class="a" style="left:33px;top:708.88px;width:22px;height:20.860000000000014px;background:#222;border-bottom:1px solid #444"></div>
<div class="a ui c" style="left:33px;top:717px;width:22px;font-size:11px;line-height:13px;color:#e8e8e8">23</div>
<div class="a" style="left:190px;top:162px;width:1px;height:11px;background:#e6e6e6"></div>
<div class="a" style="left:267px;top:162px;width:1px;height:11px;background:#e6e6e6"></div>
<div class="a" style="left:404px;top:162px;width:1px;height:11px;background:#e6e6e6"></div>
<div class="a" style="left:481px;top:162px;width:1px;height:11px;background:#e6e6e6"></div>
<div class="a" style="left:565px;top:162px;width:1px;height:11px;background:#e6e6e6"></div>
<div class="a" style="left:645px;top:162px;width:1px;height:11px;background:#e6e6e6"></div>
<div class="a" style="left:754px;top:162px;width:1px;height:11px;background:#e6e6e6"></div>
<div class="a" style="left:857px;top:162px;width:1px;height:11px;background:#e6e6e6"></div>
<div class="a" style="left:879px;top:162px;width:1px;height:11px;background:#e6e6e6"></div>
<div class="a" style="left:989px;top:162px;width:1px;height:11px;background:#e6e6e6"></div>
<div class="a" style="left:55px;top:172px;width:911px;height:1px;background:#e6e6e6"></div>
<div class="a" style="left:55px;top:221px;width:911px;height:1px;background:#d4d4d4"></div>
<div class="a" style="left:70px;top:173px;width:576px;height:48px;background:#4b98a0;border:1px solid #3c6e62;box-shadow:inset 0 0 0 1px #5fa8ae"></div>
<div class="a sf c" style="left:77.5px;top:179px;width:576px;font-size:28.7px;line-height:36px;color:#fff">SALES REPORT</div>
<div class="a" style="left:643px;top:219px;width:5px;height:5px;background:#3c6e62;border:1px solid #fff"></div>
<div class="a" style="left:755px;top:173px;width:125px;height:48px;background:#d4e6f3"></div>
<div class="a sh c" style="left:755px;top:191.6px;width:125px;font-size:10.7px;font-weight:bold;color:#24425f">Received revenue</div>
<div class="a" style="left:880px;top:173px;width:100px;height:48px;background:#4b98a0"></div>
<div class="a sh" style="left:904px;top:191.6px;font-size:10.7px;font-weight:bold;color:#fff">$1,005,230</div>
<div class="a" style="left:71.4px;top:249.2px;width:201.6px;height:86.2px;background:#fff;border:1px solid #c4dde5"></div>
<div class="a sh" style="left:80px;top:253.8px;font-size:10.1px;font-weight:bold;color:#1b1b1b">Region</div>
<div class="a" style="left:80px;top:270px;width:185px;height:1px;background:#c9dfe6"></div>
<div class="a" style="left:229px;top:252px;width:17px;height:16px;background:#8c8c8c;border-radius:1px"></div>
<div class="a" style="left:232px;top:255px;width:11px;height:2.5px;background:#f2f2f2"></div>
<div class="a" style="left:232px;top:259px;width:11px;height:2.5px;background:#f2f2f2"></div>
<div class="a" style="left:232px;top:263px;width:11px;height:2.5px;background:#f2f2f2"></div>
<svg style="left:249px;top:254px" width="14" height="13" viewBox="0 0 14 13"><path d="M1 1h9l-3.5 4.2v5l-2-1.4v-3.6z" fill="#c9c9c9"/><path d="M9.5 8.5l3 3m0-3l-3 3" stroke="#c9c9c9" stroke-width="1" fill="none"/></svg>
<div class="a sh" style="left:80px;top:274px;width:91px;height:21px;background:#b9e5ec;border:1px solid #9dd3dc;padding-left:7px;line-height:20px;font-size:11.1px;color:#16323f;-webkit-text-stroke:0.3px">Asia</div>
<div class="a sh" style="left:174px;top:274px;width:91px;height:21px;background:#b9e5ec;border:1px solid #9dd3dc;padding-left:7px;line-height:20px;font-size:11.1px;color:#16323f;-webkit-text-stroke:0.3px">Europe</div>
<div class="a sh" style="left:80px;top:298px;width:91px;height:21px;background:#b9e5ec;border:1px solid #9dd3dc;padding-left:7px;line-height:20px;font-size:11.1px;color:#16323f;-webkit-text-stroke:0.3px">North America</div>
<div class="a sh" style="left:174px;top:298px;width:91px;height:21px;background:#b9e5ec;border:1px solid #9dd3dc;padding-left:7px;line-height:20px;font-size:11.1px;color:#16323f;-webkit-text-stroke:0.3px">South America</div>
<div class="a" style="left:71.4px;top:341.5px;width:201.6px;height:151.5px;background:#fff;border:1px solid #c4dde5"></div>
<div class="a sh" style="left:80px;top:345.6px;font-size:10.1px;font-weight:bold;color:#1b1b1b">Client Name</div>
<div class="a" style="left:80px;top:361px;width:185px;height:1px;background:#c9dfe6"></div>
<div class="a" style="left:232px;top:347.0px;width:10px;height:2.4px;background:#444;border-radius:0.5px"></div>
<div class="a" style="left:232px;top:350.6px;width:10px;height:2.4px;background:#444;border-radius:0.5px"></div>
<div class="a" style="left:232px;top:354.2px;width:10px;height:2.4px;background:#444;border-radius:0.5px"></div>
<svg style="left:249px;top:346px" width="14" height="13" viewBox="0 0 14 13"><path d="M1 1h9l-3.5 4.2v5l-2-1.4v-3.6z" fill="#c9c9c9"/><path d="M9.5 8.5l3 3m0-3l-3 3" stroke="#c9c9c9" stroke-width="1" fill="none"/></svg>
<div class="a sh" style="left:80px;top:365.7px;width:169px;height:21px;background:#a9c9e9;border:1px solid #9bbfe3;padding-left:7px;line-height:20px;font-size:11.1px;color:#16323f;-webkit-text-stroke:0.3px">AI Nexus Robotics</div>
<div class="a sh" style="left:80px;top:389.84999999999997px;width:169px;height:21px;background:#a9c9e9;border:1px solid #9bbfe3;padding-left:7px;line-height:20px;font-size:11.1px;color:#16323f;-webkit-text-stroke:0.3px">Apex Management</div>
<div class="a sh" style="left:80px;top:414.0px;width:169px;height:21px;background:#a9c9e9;border:1px solid #9bbfe3;padding-left:7px;line-height:20px;font-size:11.1px;color:#16323f;-webkit-text-stroke:0.3px">BrightMinds Academy</div>
<div class="a sh" style="left:80px;top:438.15px;width:169px;height:21px;background:#a9c9e9;border:1px solid #9bbfe3;padding-left:7px;line-height:20px;font-size:11.1px;color:#16323f;-webkit-text-stroke:0.3px">Capital Crest Advisors</div>
<div class="a sh" style="left:80px;top:462.29999999999995px;width:169px;height:21px;background:#a9c9e9;border:1px solid #9bbfe3;padding-left:7px;line-height:20px;font-size:11.1px;color:#16323f;-webkit-text-stroke:0.3px">CyberCore Analytics</div>
<div class="a" style="left:252px;top:366px;width:11px;height:12px;background:#f3f3f3;border:1px solid #dcdcdc"></div>
<div class="a" style="left:252px;top:378px;width:11px;height:24px;background:#f3f3f3;border:1px solid #dcdcdc"></div>
<div class="a" style="left:252px;top:473px;width:11px;height:11px;background:#f3f3f3;border:1px solid #dcdcdc"></div>
<svg style="left:252px;top:366px" width="11" height="12"><polygon points="3.5,7 7.5,7 5.5,4.5" fill="#aaa"/></svg>
<svg style="left:252px;top:473px" width="11" height="11"><polygon points="3.5,4.5 7.5,4.5 5.5,7" fill="#aaa"/></svg>
<div class="a" style="left:278.6px;top:249.4px;width:395.4px;height:243.6px;background:#f2f2f2;border:1px solid #dedede"></div>
<div class="a sh c" style="left:276.5px;top:269.4px;width:395px;font-size:13px;letter-spacing:1.1px;color:#5a5a5a">REVENUE BY INDUSTRY</div>
<div class="a" style="left:290px;top:296px;width:100px;height:156px;background:#fff"></div>
<div class="a" style="left:304px;top:303.5px;width:6.2px;height:6.2px;background:#4aa3df"></div>
<div class="a sh" style="left:313.7px;top:300.0px;font-size:10.2px;line-height:13px;color:#595959">Construction</div>
<div class="a" style="left:304px;top:323.1px;width:6.2px;height:6.2px;background:#3f7bbf"></div>
<div class="a sh" style="left:313.7px;top:319.6px;font-size:10.2px;line-height:13px;color:#595959">Education</div>
<div class="a" style="left:304px;top:342.7px;width:6.2px;height:6.2px;background:#5cc7d6"></div>
<div class="a sh" style="left:313.7px;top:339.2px;font-size:10.2px;line-height:13px;color:#595959">Energy</div>
<div class="a" style="left:304px;top:362.3px;width:6.2px;height:6.2px;background:#66b89a"></div>
<div class="a sh" style="left:313.7px;top:358.8px;font-size:10.2px;line-height:13px;color:#595959">Finance</div>
<div class="a" style="left:304px;top:381.9px;width:6.2px;height:6.2px;background:#4d8c57"></div>
<div class="a sh" style="left:313.7px;top:378.4px;font-size:10.2px;line-height:13px;color:#595959">Healthcare</div>
<div class="a" style="left:304px;top:401.5px;width:6.2px;height:6.2px;background:#6aa09b"></div>
<div class="a sh" style="left:313.7px;top:398.0px;font-size:10.2px;line-height:13px;color:#595959">Manufacturing</div>
<div class="a" style="left:304px;top:421.1px;width:6.2px;height:6.2px;background:#3d8a6e"></div>
<div class="a sh" style="left:313.7px;top:417.6px;font-size:10.2px;line-height:13px;color:#595959">Retail</div>
<div class="a" style="left:304px;top:440.70000000000005px;width:6.2px;height:6.2px;background:#264a73"></div>
<div class="a sh" style="left:313.7px;top:437.20000000000005px;font-size:10.2px;line-height:13px;color:#595959">Technology</div>
<div class="a" style="left:412.3px;top:299.5px;width:1px;height:130px;background:#dcdcdc"></div>
<div class="a" style="left:492.1px;top:299.5px;width:1px;height:130px;background:#dcdcdc"></div>
<div class="a" style="left:571.2px;top:299.5px;width:1px;height:130px;background:#dcdcdc"></div>
<div class="a" style="left:651.0px;top:299.5px;width:1px;height:130px;background:#dcdcdc"></div>
<div class="a" style="left:413px;top:309.0px;width:31.084500000000002px;height:13.6px;background:#264a73"></div>
<div class="a sh" style="left:472px;top:309px;font-size:8.9px;line-height:13px;color:#222">$78,200</div>
<div class="a" style="left:413px;top:322.56px;width:206.02425px;height:13.6px;background:#3d8a6e"></div>
<div class="a sh" style="left:578.5px;top:323px;font-size:8.9px;line-height:13px;color:#fff">$518,300</div>
<div class="a" style="left:413px;top:336.12px;width:51.845925px;height:13.6px;background:#6aa09b"></div>
<div class="a sh" style="left:494px;top:337.8px;font-size:8.9px;line-height:13px;color:#222">$130,430</div>
<div class="a" style="left:413px;top:349.68px;width:41.181000000000004px;height:13.6px;background:#4d8c57"></div>
<div class="a sh" style="left:494px;top:351.6px;font-size:8.9px;line-height:13px;color:#222">$103,600</div>
<div class="a" style="left:413px;top:363.24px;width:55.570499999999996px;height:13.6px;background:#66b89a"></div>
<div class="a sh" style="left:494.6px;top:365.6px;font-size:8.9px;line-height:13px;color:#222">$139,800</div>
<div class="a" style="left:413px;top:376.8px;width:19.636499999999998px;height:13.6px;background:#5cc7d6"></div>
<div class="a sh" style="left:490.6px;top:379.2px;font-size:8.9px;line-height:13px;color:#222">$49,400</div>
<div class="a" style="left:413px;top:390.36px;width:37.762499999999996px;height:13.6px;background:#3f7bbf"></div>
<div class="a sh" style="left:492px;top:392px;font-size:8.9px;line-height:13px;color:#222">$95,000</div>
<div class="a" style="left:413px;top:403.92px;width:34.14525px;height:13.6px;background:#4aa3df"></div>
<div class="a sh" style="left:494px;top:407px;font-size:8.9px;line-height:13px;color:#222">$85,900</div>
<div class="a sh c" style="left:382.8px;top:437px;width:60px;font-size:9px;line-height:13px;color:#666">$0</div>
<div class="a sh c" style="left:462.6px;top:437px;width:60px;font-size:9px;line-height:13px;color:#666">$200,000</div>
<div class="a sh c" style="left:541.7px;top:437px;width:60px;font-size:9px;line-height:13px;color:#666">$400,000</div>
<div class="a sh c" style="left:621.5px;top:437px;width:60px;font-size:9px;line-height:13px;color:#666">$600,000</div>
<div class="a" style="left:686.2px;top:249.4px;width:300px;height:243.6px;background:#fff;border:1px solid #dedede"></div>
<div class="a" style="left:878px;top:260.5px;width:8px;height:8px;background:#4aa3df"></div>
<div class="a sf" style="left:893px;top:255px;font-size:16px;line-height:20px;color:#555">Asia</div>
<div class="a" style="left:928px;top:260.5px;width:8px;height:8px;background:#6aa09b"></div>
<div class="a sf" style="left:943px;top:255px;font-size:16px;line-height:20px;color:#555">Europe</div>
<div class="a" style="left:697px;top:278px;width:1px;height:183px;background:#d9d9d9"></div>
<div class="a" style="left:697px;top:461px;width:300px;height:1px;background:#d0d0d0"></div>
<div class="a" style="left:799px;top:278px;width:1px;height:183px;background:#e0e0e0"></div>
<div class="a" style="left:900px;top:278px;width:1px;height:183px;background:#e0e0e0"></div>
<div class="a" style="left:719.5px;top:278.3px;width:57px;height:43px;background:#66b89a"></div>
<div class="a" style="left:719.5px;top:321.2px;width:57px;height:139.8px;background:#3f7bbf"></div>
<div class="a" style="left:821px;top:278.3px;width:57.3px;height:182.7px;background:#6aa09b"></div>
<div class="a" style="left:922.6px;top:278.3px;width:57.3px;height:143.7px;background:#66b89a"></div>
<div class="a" style="left:922.6px;top:422px;width:57.3px;height:39px;background:#6aa09b"></div>
<div class="a sh c" style="left:708px;top:294.4px;width:80px;font-size:9px;line-height:13px;color:#fff">$18,900</div>
<div class="a sh c" style="left:708px;top:386.0px;width:80px;font-size:9px;line-height:13px;color:#fff">$61,800</div>
<div class="a sh c" style="left:810px;top:365.0px;width:80px;font-size:9px;line-height:13px;color:#fff">$95,000</div>
<div class="a sh c" style="left:911.5px;top:344.9px;width:80px;font-size:9px;line-height:13px;color:#fff">$50,800</div>
<div class="a sh c" style="left:911.5px;top:436.4px;width:80px;font-size:9px;line-height:13px;color:#fff">$14,000</div>
<div class="a sh c" style="left:688px;top:472px;width:120px;font-size:7.6px;line-height:12px;letter-spacing:1.75px;color:#595959">ANDREW THOMPSON</div>
<div class="a sh c" style="left:790px;top:472px;width:120px;font-size:7.6px;line-height:12px;letter-spacing:1.75px;color:#595959">DAVID NGUYEN</div>
<div class="a sh c" style="left:891.5px;top:472px;width:120px;font-size:7.6px;line-height:12px;letter-spacing:1.75px;color:#595959">EMILY JOHNSON</div>
<div class="a" style="left:70px;top:508px;width:788px;height:34px;background:#79abdb"></div>
<div class="a sf" style="left:72px;top:517.5px;font-size:13.3px;line-height:15.3px">Client Name</div>
<div class="a sf" style="left:192px;top:517.5px;font-size:13.3px;line-height:15.3px">Industry</div>
<div class="a sf" style="left:269px;top:517.5px;font-size:13.3px;line-height:15.3px">Consulting Service</div>
<div class="a sf" style="left:407px;top:509.7px;font-size:13.3px;line-height:15.3px">Proj.<br>duration</div>
<div class="a sf" style="left:484px;top:517.5px;font-size:13.3px;line-height:15.3px">Total Fees</div>
<div class="a sf" style="left:567px;top:517.5px;font-size:13.3px;line-height:15.3px">Status</div>
<div class="a sf" style="left:647px;top:517.5px;font-size:13.3px;line-height:15.3px">Region</div>
<div class="a sf" style="left:756px;top:509.7px;font-size:13.3px;line-height:15.3px">Sales<br>Representative</div>
<div class="a" style="left:176px;top:527.4px;width:13.6px;height:13.6px;background:#fff;border:1px solid #d4e2f0"></div>
<svg style="left:176.3px;top:528px" width="13" height="13"><polygon points="3.5,5.5 9.5,5.5 6.5,8.8" fill="#5a5a5a"/></svg>
<div class="a" style="left:253px;top:527.4px;width:13.6px;height:13.6px;background:#fff;border:1px solid #d4e2f0"></div>
<svg style="left:253.3px;top:528px" width="13" height="13"><polygon points="3.5,5.5 9.5,5.5 6.5,8.8" fill="#5a5a5a"/></svg>
<div class="a" style="left:390px;top:527.4px;width:13.6px;height:13.6px;background:#fff;border:1px solid #d4e2f0"></div>
<svg style="left:390.3px;top:528px" width="13" height="13"><polygon points="3.5,5.5 9.5,5.5 6.5,8.8" fill="#5a5a5a"/></svg>
<div class="a" style="left:467px;top:527.4px;width:13.6px;height:13.6px;background:#fff;border:1px solid #d4e2f0"></div>
<svg style="left:467.3px;top:528px" width="13" height="13"><polygon points="3.5,5.5 9.5,5.5 6.5,8.8" fill="#5a5a5a"/></svg>
<div class="a" style="left:551px;top:527.4px;width:13.6px;height:13.6px;background:#fff;border:1px solid #d4e2f0"></div>
<svg style="left:551.3px;top:528px" width="13" height="13"><polygon points="3.5,5.5 9.5,5.5 6.5,8.8" fill="#5a5a5a"/></svg>
<div class="a" style="left:631px;top:527.4px;width:13.6px;height:13.6px;background:#fff;border:1px solid #d4e2f0"></div>
<svg style="left:631.3px;top:528px" width="13" height="13"><polygon points="3.5,5.5 9.5,5.5 6.5,8.8" fill="#5a5a5a"/></svg>
<div class="a" style="left:740px;top:527.4px;width:13.6px;height:13.6px;background:#fff;border:1px solid #d4e2f0"></div>
<svg style="left:740.3px;top:528px" width="13" height="13"><polygon points="3.5,5.5 9.5,5.5 6.5,8.8" fill="#5a5a5a"/></svg>
<div class="a" style="left:843px;top:527.4px;width:13.6px;height:13.6px;background:#fff;border:1px solid #d4e2f0"></div>
<svg style="left:843.3px;top:528px" width="13" height="13"><polygon points="3.5,5.5 9.5,5.5 6.5,8.8" fill="#5a5a5a"/></svg>
<div class="a" style="left:70px;top:542.0px;width:788px;height:20.86px;background:#d7eaf8"></div>
<div class="a" style="left:70px;top:562.36px;width:788px;height:1px;background:#c3dbef"></div>
<div class="a sh" style="left:72px;top:542.0px;font-size:10px;line-height:24.4px;">DataWave Innovations</div>
<div class="a sh c" style="left:191px;top:542.0px;width:77px;font-size:10px;line-height:24.4px;">Technology</div>
<div class="a sh c" style="left:268px;top:542.0px;width:137px;font-size:10px;line-height:24.4px;">Strategic Planning</div>
<div class="a sh c" style="left:405px;top:542.0px;width:77px;font-size:10px;line-height:24.4px;">3 months</div>
<div class="a sh c" style="left:482px;top:542.0px;width:84px;font-size:10px;line-height:24.4px;font-weight:bold;font-size:9.6px;color:#3a5663;">$54,500</div>
<div class="a" style="left:566px;top:542.0px;width:80px;height:20.4px;background:#c9eed3"></div>
<div class="a sh c" style="left:566px;top:542.0px;width:80px;font-size:10px;line-height:24.4px;color:#2f6f43;">Completed</div>
<div class="a sh c" style="left:646px;top:542.0px;width:109px;font-size:10px;line-height:24.4px;">North America</div>
<div class="a sh c" style="left:755px;top:542.0px;width:103px;font-size:10px;line-height:24.4px;">Andrew Thompson</div>
<div class="a" style="left:70px;top:583.22px;width:788px;height:1px;background:#c3dbef"></div>
<div class="a sh" style="left:72px;top:562.86px;font-size:10px;line-height:24.4px;">MedicaMinds</div>
<div class="a sh c" style="left:191px;top:562.86px;width:77px;font-size:10px;line-height:24.4px;">Healthcare</div>
<div class="a sh c" style="left:268px;top:562.86px;width:137px;font-size:10px;line-height:24.4px;">Process Improvement</div>
<div class="a sh c" style="left:405px;top:562.86px;width:77px;font-size:10px;line-height:24.4px;">4 months</div>
<div class="a sh c" style="left:482px;top:562.86px;width:84px;font-size:10px;line-height:24.4px;font-weight:bold;font-size:9.6px;color:#3a5663;">$95,200</div>
<div class="a" style="left:566px;top:562.86px;width:80px;height:20.4px;background:#fde79e"></div>
<div class="a sh c" style="left:566px;top:562.86px;width:80px;font-size:10px;line-height:24.4px;color:#9a6a12;">Ongoing</div>
<div class="a sh c" style="left:646px;top:562.86px;width:109px;font-size:10px;line-height:24.4px;">Europe</div>
<div class="a sh c" style="left:755px;top:562.86px;width:103px;font-size:10px;line-height:24.4px;">Jessica Martinez</div>
<div class="a" style="left:70px;top:583.72px;width:788px;height:20.86px;background:#d7eaf8"></div>
<div class="a" style="left:70px;top:604.08px;width:788px;height:1px;background:#c3dbef"></div>
<div class="a sh" style="left:72px;top:583.72px;font-size:10px;line-height:24.4px;">Capital Crest Advisors</div>
<div class="a sh c" style="left:191px;top:583.72px;width:77px;font-size:10px;line-height:24.4px;">Finance</div>
<div class="a sh c" style="left:268px;top:583.72px;width:137px;font-size:10px;line-height:24.4px;">Risk Management</div>
<div class="a sh c" style="left:405px;top:583.72px;width:77px;font-size:10px;line-height:24.4px;">2 months</div>
<div class="a sh c" style="left:482px;top:583.72px;width:84px;font-size:10px;line-height:24.4px;font-weight:bold;font-size:9.6px;color:#3a5663;">$42,000</div>
<div class="a" style="left:566px;top:583.72px;width:80px;height:20.4px;background:#c9eed3"></div>
<div class="a sh c" style="left:566px;top:583.72px;width:80px;font-size:10px;line-height:24.4px;color:#2f6f43;">Completed</div>
<div class="a sh c" style="left:646px;top:583.72px;width:109px;font-size:10px;line-height:24.4px;">Asia</div>
<div class="a sh c" style="left:755px;top:583.72px;width:103px;font-size:10px;line-height:24.4px;">Jessica Martinez</div>
<div class="a" style="left:70px;top:624.94px;width:788px;height:1px;background:#c3dbef"></div>
<div class="a sh" style="left:72px;top:604.58px;font-size:10px;line-height:24.4px;">Titan Metalworks</div>
<div class="a sh c" style="left:191px;top:604.58px;width:77px;font-size:10px;line-height:24.4px;">Manufacturing</div>
<div class="a sh c" style="left:268px;top:604.58px;width:137px;font-size:10px;line-height:24.4px;">Supply Chain Optimization</div>
<div class="a sh c" style="left:405px;top:604.58px;width:77px;font-size:10px;line-height:24.4px;">1 month</div>
<div class="a sh c" style="left:482px;top:604.58px;width:84px;font-size:10px;line-height:24.4px;font-weight:bold;font-size:9.6px;color:#3a5663;">$11,030</div>
<div class="a" style="left:566px;top:604.58px;width:80px;height:20.4px;background:#c9eed3"></div>
<div class="a sh c" style="left:566px;top:604.58px;width:80px;font-size:10px;line-height:24.4px;color:#2f6f43;">Completed</div>
<div class="a sh c" style="left:646px;top:604.58px;width:109px;font-size:10px;line-height:24.4px;">South America</div>
<div class="a sh c" style="left:755px;top:604.58px;width:103px;font-size:10px;line-height:24.4px;">Michael Harris</div>
<div class="a" style="left:70px;top:625.44px;width:788px;height:20.86px;background:#d7eaf8"></div>
<div class="a" style="left:70px;top:645.8000000000001px;width:788px;height:1px;background:#c3dbef"></div>
<div class="a sh" style="left:72px;top:625.44px;font-size:10px;line-height:24.4px;">Trendy Threads</div>
<div class="a sh c" style="left:191px;top:625.44px;width:77px;font-size:10px;line-height:24.4px;">Retail</div>
<div class="a sh c" style="left:268px;top:625.44px;width:137px;font-size:10px;line-height:24.4px;">Market Analysis</div>
<div class="a sh c" style="left:405px;top:625.44px;width:77px;font-size:10px;line-height:24.4px;">6 months</div>
<div class="a sh c" style="left:482px;top:625.44px;width:84px;font-size:10px;line-height:24.4px;font-weight:bold;font-size:9.6px;color:#3a5663;">$112,000</div>
<div class="a" style="left:566px;top:625.44px;width:80px;height:20.4px;background:#c9eed3"></div>
<div class="a sh c" style="left:566px;top:625.44px;width:80px;font-size:10px;line-height:24.4px;color:#2f6f43;">Completed</div>
<div class="a sh c" style="left:646px;top:625.44px;width:109px;font-size:10px;line-height:24.4px;">Europe</div>
<div class="a sh c" style="left:755px;top:625.44px;width:103px;font-size:10px;line-height:24.4px;">James Wilson</div>
<div class="a" style="left:70px;top:666.66px;width:788px;height:1px;background:#c3dbef"></div>
<div class="a sh" style="left:72px;top:646.3px;font-size:10px;line-height:24.4px;">Apex Management</div>
<div class="a sh c" style="left:191px;top:646.3px;width:77px;font-size:10px;line-height:24.4px;">Finance</div>
<div class="a sh c" style="left:268px;top:646.3px;width:137px;font-size:10px;line-height:24.4px;">Risk Management</div>
<div class="a sh c" style="left:405px;top:646.3px;width:77px;font-size:10px;line-height:24.4px;">2 months</div>
<div class="a sh c" style="left:482px;top:646.3px;width:84px;font-size:10px;line-height:24.4px;font-weight:bold;font-size:9.6px;color:#3a5663;">$14,000</div>
<div class="a" style="left:566px;top:646.3px;width:80px;height:20.4px;background:#c9eed3"></div>
<div class="a sh c" style="left:566px;top:646.3px;width:80px;font-size:10px;line-height:24.4px;color:#2f6f43;">Completed</div>
<div class="a sh c" style="left:646px;top:646.3px;width:109px;font-size:10px;line-height:24.4px;">Europe</div>
<div class="a sh c" style="left:755px;top:646.3px;width:103px;font-size:10px;line-height:24.4px;">Emily Johnson</div>
<div class="a" style="left:70px;top:667.16px;width:788px;height:20.86px;background:#d7eaf8"></div>
<div class="a" style="left:70px;top:687.52px;width:788px;height:1px;background:#c3dbef"></div>
<div class="a sh" style="left:72px;top:667.16px;font-size:10px;line-height:24.4px;">Horizon Equity Solutions</div>
<div class="a sh c" style="left:191px;top:667.16px;width:77px;font-size:10px;line-height:24.4px;">Finance</div>
<div class="a sh c" style="left:268px;top:667.16px;width:137px;font-size:10px;line-height:24.4px;">Risk Management</div>
<div class="a sh c" style="left:405px;top:667.16px;width:77px;font-size:10px;line-height:24.4px;">5 months</div>
<div class="a sh c" style="left:482px;top:667.16px;width:84px;font-size:10px;line-height:24.4px;font-weight:bold;font-size:9.6px;color:#3a5663;">$83,800</div>
<div class="a" style="left:566px;top:667.16px;width:80px;height:20.4px;background:#fde79e"></div>
<div class="a sh c" style="left:566px;top:667.16px;width:80px;font-size:10px;line-height:24.4px;color:#9a6a12;">Ongoing</div>
<div class="a sh c" style="left:646px;top:667.16px;width:109px;font-size:10px;line-height:24.4px;">South America</div>
<div class="a sh c" style="left:755px;top:667.16px;width:103px;font-size:10px;line-height:24.4px;">Michael Harris</div>
<div class="a" style="left:70px;top:708.38px;width:788px;height:1px;background:#c3dbef"></div>
<div class="a sh" style="left:72px;top:688.02px;font-size:10px;line-height:24.4px;">NexGen Tech Labs</div>
<div class="a sh c" style="left:191px;top:688.02px;width:77px;font-size:10px;line-height:24.4px;">Technology</div>
<div class="a sh c" style="left:268px;top:688.02px;width:137px;font-size:10px;line-height:24.4px;">Market Analysis</div>
<div class="a sh c" style="left:405px;top:688.02px;width:77px;font-size:10px;line-height:24.4px;">1 month</div>
<div class="a sh c" style="left:482px;top:688.02px;width:84px;font-size:10px;line-height:24.4px;font-weight:bold;font-size:9.6px;color:#3a5663;">$8,900</div>
<div class="a" style="left:566px;top:688.02px;width:80px;height:20.4px;background:#fde79e"></div>
<div class="a sh c" style="left:566px;top:688.02px;width:80px;font-size:10px;line-height:24.4px;color:#9a6a12;">Ongoing</div>
<div class="a sh c" style="left:646px;top:688.02px;width:109px;font-size:10px;line-height:24.4px;">North America</div>
<div class="a sh c" style="left:755px;top:688.02px;width:103px;font-size:10px;line-height:24.4px;">Megan Brown</div>
<div class="a" style="left:190.5px;top:542px;width:1px;height:169px;background:#c3dbef"></div>
<div class="a" style="left:267.5px;top:542px;width:1px;height:169px;background:#c3dbef"></div>
<div class="a" style="left:404.5px;top:542px;width:1px;height:169px;background:#c3dbef"></div>
<div class="a" style="left:481.5px;top:542px;width:1px;height:169px;background:#c3dbef"></div>
<div class="a" style="left:565.5px;top:542px;width:1px;height:169px;background:#c3dbef"></div>
<div class="a" style="left:645.5px;top:542px;width:1px;height:169px;background:#c3dbef"></div>
<div class="a" style="left:754.5px;top:542px;width:1px;height:169px;background:#c3dbef"></div>
<div class="a" style="left:857.5px;top:542px;width:1px;height:169px;background:#c3dbef"></div>
<div class="a" style="left:70px;top:542px;width:1px;height:169px;background:#c3dbef"></div>
<div class="a" style="left:880px;top:508px;width:110px;height:38px;background:#9bd3ba"></div>
<div class="a sf" style="left:881px;top:526px;font-size:13.3px;line-height:15px">Sum of Total Fees</div>
<div class="a" style="left:880px;top:546px;width:110px;height:17.4px;background:#b8e0ce"></div>
<div class="a sf" style="left:881px;top:549.5px;font-size:11.2px;line-height:13px;color:#2e5748">Sales Representative</div>
<div class="a sh" style="left:881px;top:568.2px;font-size:10.8px;line-height:20px;color:#2f4852">Andrew Thompson</div>
<div class="a" style="left:880px;top:583.5px;width:110px;height:1px;background:#dde5e2"></div>
<div class="a sh" style="left:881px;top:589.0600000000001px;font-size:10.8px;line-height:20px;color:#2f4852">David Nguyen</div>
<div class="a" style="left:880px;top:604.36px;width:110px;height:1px;background:#dde5e2"></div>
<div class="a sh" style="left:881px;top:609.9200000000001px;font-size:10.8px;line-height:20px;color:#2f4852">Emily Johnson</div>
<div class="a" style="left:880px;top:625.22px;width:110px;height:1px;background:#dde5e2"></div>
<div class="a sh" style="left:881px;top:630.7800000000001px;font-size:10.8px;line-height:20px;color:#2f4852">James Wilson</div>
<div class="a" style="left:880px;top:646.08px;width:110px;height:1px;background:#dde5e2"></div>
<div class="a sh" style="left:881px;top:651.6400000000001px;font-size:10.8px;line-height:20px;color:#2f4852">Jessica Martinez</div>
<div class="a" style="left:880px;top:666.94px;width:110px;height:1px;background:#dde5e2"></div>
<div class="a sh" style="left:881px;top:672.5px;font-size:10.8px;line-height:20px;color:#2f4852">Megan Brown</div>
<div class="a" style="left:880px;top:687.8px;width:110px;height:1px;background:#dde5e2"></div>
<div class="a sh" style="left:881px;top:693.36px;font-size:10.8px;line-height:20px;color:#2f4852">Michael Harris</div>
<div class="a" style="left:880px;top:708.66px;width:110px;height:1px;background:#dde5e2"></div>
</div>
<div class="a" style="left:966px;top:147px;width:11px;height:564px;background:#222"></div>
<div class="a" style="left:966px;top:148.5px;width:11px;height:10px;background:#383838"></div>
<div class="a" style="left:966px;top:700px;width:11px;height:11px;background:#404040"></div>
<div class="a" style="left:966px;top:159px;width:11px;height:48px;background:#3b3b3b;border:1px solid #454545"></div>
<div class="a" style="left:969.5px;top:180.0px;width:4px;height:1px;background:#5e5e5e"></div>
<div class="a" style="left:969.5px;top:182.4px;width:4px;height:1px;background:#5e5e5e"></div>
<div class="a" style="left:969.5px;top:184.8px;width:4px;height:1px;background:#5e5e5e"></div>
<div class="a" style="left:969.5px;top:187.2px;width:4px;height:1px;background:#5e5e5e"></div>
<svg style="left:966px;top:147px" width="11" height="15"><polygon points="3,8.3 8,8.3 5.5,5.6" fill="#7a7a7a"/></svg>
<svg style="left:966px;top:700px" width="11" height="11"><polygon points="3,4 8,4 5.5,7" fill="#8a8a8a"/></svg>
<div class="a" style="left:33px;top:711px;width:933px;height:11px;background:#222"></div>
<div class="a" style="left:33px;top:711px;width:11px;height:11px;background:#404040"></div>
<div class="a" style="left:954px;top:711px;width:11px;height:11px;background:#404040"></div>
<div class="a" style="left:46px;top:711px;width:340px;height:11px;background:#3d3d3d;border:1px solid #4a4a4a"></div>
<div class="a" style="left:211px;top:714px;width:1px;height:5px;background:#6a6a6a"></div>
<div class="a" style="left:213px;top:714px;width:1px;height:5px;background:#6a6a6a"></div>
<div class="a" style="left:215px;top:714px;width:1px;height:5px;background:#6a6a6a"></div>
<div class="a" style="left:217px;top:714px;width:1px;height:5px;background:#6a6a6a"></div>
<div class="a" style="left:219px;top:714px;width:1px;height:5px;background:#6a6a6a"></div>
<svg style="left:33px;top:711px" width="11" height="11"><polygon points="7,3 7,8 4,5.5" fill="#8a8a8a"/></svg>
<svg style="left:954px;top:711px" width="11" height="11"><polygon points="4,3 4,8 7,5.5" fill="#8a8a8a"/></svg>
<div class="a" style="left:981px;top:123px;width:182.5px;height:593px;background:#404040;border-radius:7px"></div>
<div class="a ui" style="left:990px;top:128.5px;font-size:10.2px;line-height:13px;color:#f4f4f4;font-weight:bold;">Fill</div>
<div class="a" style="left:990px;top:142.5px;width:163px;height:19.5px;border:1px solid #5e5e5e;border-radius:4px"></div>
<div class="a ui" style="left:993.5px;top:146.0px;font-size:10px;line-height:13px;color:#f4f4f4;">Color fill</div>
<svg style="left:1140.6px;top:148px" width="10" height="10" viewBox="0 0 10 10"><path d="M2.7 3.85L5 6.15L7.3 3.85" fill="none" stroke="#d8d8d8" stroke-width="1.2" stroke-linecap="round" stroke-linejoin="round"/></svg>
<div class="a" style="left:990px;top:169px;width:42px;height:20px;border:1px solid #5e5e5e;border-radius:4px"></div>
<div class="a" style="left:992.5px;top:171px;width:25px;height:16px;background:#4aa0b0;border-radius:2px"></div>
<svg style="left:1019px;top:173.5px" width="10" height="10" viewBox="0 0 10 10"><path d="M2.7 3.85L5 6.15L7.3 3.85" fill="none" stroke="#d8d8d8" stroke-width="1.2" stroke-linecap="round" stroke-linejoin="round"/></svg>
<div class="a" style="left:990px;top:196px;width:163px;height:1px;background:#575757"></div>
<div class="a ui" style="left:990px;top:204.5px;font-size:10.2px;line-height:13px;color:#f4f4f4;font-weight:bold;">Borders style</div>
<div class="a" style="left:990px;top:225.5px;width:77.5px;height:19px;border:1px solid #5e5e5e;border-radius:4px"></div>
<div class="a" style="left:999px;top:235px;width:50px;height:1px;background:#dcdcdc"></div>
<svg style="left:1055px;top:230.5px" width="10" height="10" viewBox="0 0 10 10"><path d="M2.7 3.85L5 6.15L7.3 3.85" fill="none" stroke="#d8d8d8" stroke-width="1.2" stroke-linecap="round" stroke-linejoin="round"/></svg>
<div class="a ui" style="left:1083.5px;top:228.5px;font-size:10px;line-height:13px;color:#f4f4f4;">Color</div>
<div class="a" style="left:1112px;top:225.5px;width:41px;height:19px;border:1px solid #5e5e5e;border-radius:4px"></div>
<div class="a" style="left:1114.5px;top:227.5px;width:23.5px;height:14.5px;background:#000;border-radius:2px"></div>
<svg style="left:1140.6px;top:230.3px" width="10" height="10" viewBox="0 0 10 10"><path d="M2.7 3.85L5 6.15L7.3 3.85" fill="none" stroke="#d8d8d8" stroke-width="1.2" stroke-linecap="round" stroke-linejoin="round"/></svg>
<div class="a ui" style="left:990px;top:252.5px;font-size:10px;line-height:13px;color:#f4f4f4;">Select borders you want to change</div>
<div class="a ui" style="left:990px;top:267.9px;font-size:10px;line-height:13px;color:#f4f4f4;">applying style chosen above</div>
<svg class="ic" style="left:990.0px;top:288.0px;" width="20" height="20" viewBox="0 0 20 20"><path d="M4.500 4.500h12v12h-12zM10.500 4.500v12M4.500 10.500h12" stroke="#8792c4" stroke-width="1" stroke-linecap="butt" fill="none"/></svg>
<svg class="ic" style="left:1013.0px;top:288.0px;" width="20" height="20" viewBox="0 0 20 20"><rect x="4.5" y="4.5" width="12" height="12" stroke="#ececec" stroke-width="1" stroke-dasharray="2.6 1.4" stroke-dashoffset="1.3" stroke-linecap="butt"/><path d="M10.500 8.500v4M8.500 10.500h4" stroke="#f0f0f0" stroke-width="1" stroke-linecap="butt"/><path d="M5.600 9.400L7.400 10.500L5.600 11.600zM15.400 9.400L13.600 10.500L15.400 11.600zM9.400 5.600L10.500 7.400L11.600 5.600zM9.400 15.400L10.500 13.600L11.600 15.400z" fill="#e0e0e0" stroke="none"/></svg>
<svg class="ic" style="left:1037.0px;top:288.0px;" width="20" height="20" viewBox="0 0 20 20"><rect x="4.5" y="4.5" width="12" height="12" stroke="#ececec" stroke-width="1" stroke-dasharray="2.6 1.4" stroke-dashoffset="1.3" stroke-linecap="butt"/><path d="M10.500 5v11M5 10.500h11" stroke="#aab4dc" stroke-width="1" stroke-linecap="butt" fill="none"/></svg>
<svg class="ic" style="left:1060.0px;top:288.0px;" width="20" height="20" viewBox="0 0 20 20"><path d="M4.500 4.500h12v12h-12z" stroke="#8792c4" stroke-width="1" stroke-linecap="butt" fill="none"/><path d="M10.500 8.500v4M8.500 10.500h4" stroke="#f0f0f0" stroke-width="1" stroke-linecap="butt"/><path d="M5.600 9.400L7.400 10.500L5.600 11.600zM15.400 9.400L13.600 10.500L15.400 11.600zM9.400 5.600L10.500 7.400L11.600 5.600zM9.400 15.400L10.500 13.600L11.600 15.400z" fill="#e0e0e0" stroke="none"/></svg>
<svg class="ic" style="left:1083.0px;top:288.0px;" width="20" height="20" viewBox="0 0 20 20"><rect x="4.5" y="4.5" width="12" height="12" stroke="#ececec" stroke-width="1" stroke-dasharray="2.6 1.4" stroke-dashoffset="1.3" stroke-linecap="butt"/><path d="M6 15L15 6M12.200 5.800h3v3M5.800 12.200v3h3" stroke="#e6e6e6" stroke-width="1"/></svg>
<svg class="ic" style="left:1107.0px;top:288.0px;" width="20" height="20" viewBox="0 0 20 20"><rect x="4.5" y="4.5" width="12" height="12" stroke="#ececec" stroke-width="1" stroke-dasharray="2.6 1.4" stroke-dashoffset="1.3" stroke-linecap="butt"/><path d="M6 6L15 15" stroke="#e6e6e6" stroke-width="1"/></svg>
<svg class="ic" style="left:990.0px;top:315.0px;" width="20" height="20" viewBox="0 0 20 20"><rect x="4.5" y="4.5" width="12" height="12" stroke="#ececec" stroke-width="1" stroke-dasharray="2.6 1.4" stroke-dashoffset="1.3" stroke-linecap="butt"/><path d="M10.500 8.500v4M8.500 10.500h4" stroke="#f0f0f0" stroke-width="1" stroke-linecap="butt"/><path d="M5.600 9.400L7.400 10.500L5.600 11.600zM15.400 9.400L13.600 10.500L15.400 11.600zM9.400 5.600L10.500 7.400L11.600 5.600zM9.400 15.400L10.500 13.600L11.600 15.400z" fill="#e0e0e0" stroke="none"/><path d="M4.500 4v13" stroke="#8792c4" stroke-width="1" stroke-linecap="butt" fill="none"/></svg>
<svg class="ic" style="left:1013.0px;top:315.0px;" width="20" height="20" viewBox="0 0 20 20"><rect x="4.5" y="4.5" width="12" height="12" stroke="#ececec" stroke-width="1" stroke-dasharray="2.6 1.4" stroke-dashoffset="1.3" stroke-linecap="butt"/><path d="M10.500 5v11" stroke="#e2e6f4" stroke-width="1" stroke-linecap="butt" fill="none"/></svg>
<svg class="ic" style="left:1037.0px;top:315.0px;" width="20" height="20" viewBox="0 0 20 20"><rect x="4.5" y="4.5" width="12" height="12" stroke="#ececec" stroke-width="1" stroke-dasharray="2.6 1.4" stroke-dashoffset="1.3" stroke-linecap="butt"/><path d="M10.500 8.500v4M8.500 10.500h4" stroke="#f0f0f0" stroke-width="1" stroke-linecap="butt"/><path d="M5.600 9.400L7.400 10.500L5.600 11.600zM15.400 9.400L13.600 10.500L15.400 11.600zM9.400 5.600L10.500 7.400L11.600 5.600zM9.400 15.400L10.500 13.600L11.600 15.400z" fill="#e0e0e0" stroke="none"/><path d="M16.500 4v13" stroke="#8792c4" stroke-width="1" stroke-linecap="butt" fill="none"/></svg>
<svg class="ic" style="left:1060.0px;top:315.0px;" width="20" height="20" viewBox="0 0 20 20"><rect x="4.5" y="4.5" width="12" height="12" stroke="#ececec" stroke-width="1" stroke-dasharray="2.6 1.4" stroke-dashoffset="1.3" stroke-linecap="butt"/><path d="M10.500 8.500v4M8.500 10.500h4" stroke="#f0f0f0" stroke-width="1" stroke-linecap="butt"/><path d="M5.600 9.400L7.400 10.500L5.600 11.600zM15.400 9.400L13.600 10.500L15.400 11.600zM9.400 5.600L10.500 7.400L11.600 5.600zM9.400 15.400L10.500 13.600L11.600 15.400z" fill="#e0e0e0" stroke="none"/><path d="M4 4.500h13" stroke="#8792c4" stroke-width="1" stroke-linecap="butt" fill="none"/></svg>
<svg class="ic" style="left:1083.0px;top:315.0px;" width="20" height="20" viewBox="0 0 20 20"><rect x="4.5" y="4.5" width="12" height="12" stroke="#ececec" stroke-width="1" stroke-dasharray="2.6 1.4" stroke-dashoffset="1.3" stroke-linecap="butt"/><path d="M5 10.500h11" stroke="#e2e6f4" stroke-width="1" stroke-linecap="butt" fill="none"/></svg>
<svg class="ic" style="left:1107.0px;top:315.0px;" width="20" height="20" viewBox="0 0 20 20"><rect x="4.5" y="4.5" width="12" height="12" stroke="#ececec" stroke-width="1" stroke-dasharray="2.6 1.4" stroke-dashoffset="1.3" stroke-linecap="butt"/><path d="M10.500 8.500v4M8.500 10.500h4" stroke="#f0f0f0" stroke-width="1" stroke-linecap="butt"/><path d="M5.600 9.400L7.400 10.500L5.600 11.600zM15.400 9.400L13.600 10.500L15.400 11.600zM9.400 5.600L10.500 7.400L11.600 5.600zM9.400 15.400L10.500 13.600L11.600 15.400z" fill="#e0e0e0" stroke="none"/><path d="M4 16.500h13" stroke="#8792c4" stroke-width="1" stroke-linecap="butt" fill="none"/></svg>
<div class="a" style="left:990px;top:343px;width:163px;height:1px;background:#575757"></div>
<div class="a ui" style="left:990px;top:351.5px;font-size:10.2px;line-height:13px;color:#f4f4f4;font-weight:bold;">Indent</div>
<div class="a" style="left:990px;top:366.5px;width:49.5px;height:19px;border:1px solid #5e5e5e;border-radius:4px"></div>
<div class="a ui" style="left:1018.5px;top:369.3px;font-size:10.5px;line-height:13px;color:#f4f4f4;">0</div>
<svg style="left:1027.400px;top:375px" width="10" height="10" viewBox="0 0 10 10"><path d="M3 4L5 6L7 4" fill="none" stroke="#d8d8d8" stroke-width="1" stroke-linecap="round" stroke-linejoin="round"/></svg>
<svg style="left:1027.400px;top:366px" width="10" height="10" viewBox="0 0 10 10"><path d="M3 6L5 4L7 6" fill="none" stroke="#d8d8d8" stroke-width="1" stroke-linecap="round" stroke-linejoin="round"/></svg>
<div class="a ui" style="left:990px;top:400.0px;font-size:10.2px;line-height:13px;color:#f4f4f4;font-weight:bold;">Text orientation</div>
<div class="a ui" style="left:990px;top:424.3px;font-size:10px;line-height:13px;color:#f4f4f4;">Angle</div>
<div class="a" style="left:1022.5px;top:421.7px;width:50px;height:18.5px;border:1px solid #5e5e5e;border-radius:4px"></div>
<div class="a ui" style="left:1043.5px;top:424.5px;font-size:10.5px;line-height:13px;color:#f4f4f4;">0 °</div>
<svg style="left:1060px;top:421px" width="10" height="10" viewBox="0 0 10 10"><path d="M3 6L5 4L7 6" fill="none" stroke="#d8d8d8" stroke-width="1" stroke-linecap="round" stroke-linejoin="round"/></svg>
<svg style="left:1060px;top:430px" width="10" height="10" viewBox="0 0 10 10"><path d="M3 4L5 6L7 4" fill="none" stroke="#d8d8d8" stroke-width="1" stroke-linecap="round" stroke-linejoin="round"/></svg>
<div class="a ui" style="left:990px;top:455.1px;font-size:10.2px;line-height:13px;color:#f4f4f4;font-weight:bold;">Text control</div>
<div class="a" style="left:990px;top:478px;width:11.5px;height:11.5px;border:1px solid #9a9a9a;border-radius:3px"></div>
<div class="a ui" style="left:1008.5px;top:477.1px;font-size:10px;line-height:13px;color:#f4f4f4;">Wrap text</div>
<div class="a" style="left:990px;top:499.3px;width:11.5px;height:11.5px;border:1px solid #9a9a9a;border-radius:3px"></div>
<div class="a ui" style="left:1008.5px;top:498.5px;font-size:10px;line-height:13px;color:#f4f4f4;">Shrink to fit</div>
<div class="a" style="left:990px;top:519.5px;width:163px;height:1px;background:#575757"></div>
<svg class="ic" style="left:990.6px;top:526.8px;" width="20" height="20" viewBox="0 0 20 20"><path d="M14.800 7.600v-3.600h-10.400v10h3.600M4.400 7h10.400M4.400 10h3.600M7.600 4v10"/><rect x="9" y="9.200" width="7.400" height="6.800" rx="1" fill="#404040"/><path d="M11 11.200l2 1.400l-2 1.400M13.400 14.200h1.400"/></svg>
<div class="a ui" style="left:1013.5px;top:530.0px;font-size:10px;line-height:13px;color:#f4f4f4;">Conditional formatting</div>
<svg style="left:1115.5px;top:532.5px" width="10" height="10" viewBox="0 0 10 10"><path d="M3 4.0L5 6.0L7 4.0" fill="none" stroke="#d8d8d8" stroke-width="1" stroke-linecap="round" stroke-linejoin="round"/></svg>
<div class="a" style="left:1172px;top:136px;width:23px;height:20px;background:#6b6b6b;border-radius:4px"></div>
<svg class="ic" style="left:1173.5px;top:136.0px;" width="20" height="20" viewBox="0 0 20 20"><rect x="3.800" y="4.600" width="12.400" height="10.800" rx="1.400" stroke="#fafafa" stroke-width="1.300"/><path d="M3.800 8h12.400M3.800 12h12.400M6.400 4.600v10.800M13.600 4.600v10.800" stroke="#fafafa"/></svg>
<svg class="ic" style="left:1173.5px;top:165.0px;" width="20" height="20" viewBox="0 0 20 20"><g stroke="#a6a6a6"><rect x="4" y="4.600" width="12" height="10.800" rx="1.200"/><path d="M4 8.200h12M4 11.800h12M8 4.600v10.800M12 4.600v10.800"/></g></svg>
<svg class="ic" style="left:1173.5px;top:194.0px;" width="20" height="20" viewBox="0 0 20 20"><g stroke="#a6a6a6"><circle cx="8.400" cy="8.400" r="4.200"/><rect x="8.800" y="8.800" width="7" height="7" rx="1" fill="#222"/></g></svg>
<svg class="ic" style="left:1173.5px;top:222.0px;" width="20" height="20" viewBox="0 0 20 20"><g stroke="#a6a6a6"><rect x="4.400" y="4" width="11.200" height="12" rx="1.200"/><circle cx="12" cy="7.600" r="1.200"/><path d="M4.600 15.400l5.400-4.600l5.400 4.600"/></g></svg>
<svg class="ic" style="left:1173.5px;top:251.0px;" width="20" height="20" viewBox="0 0 20 20"><g stroke="#a6a6a6"><circle cx="5" cy="14.400" r="1.300"/><rect x="8" y="10.400" width="2.400" height="5.400" rx=".800"/><rect x="12.600" y="4.400" width="2.400" height="11.400" rx=".800"/></g></svg>
<svg class="ic" style="left:1173.5px;top:278.5px;" width="20" height="20" viewBox="0 0 20 20"><g stroke="#a6a6a6"><path d="M12.600 15.600v-11h-3.400a3 3 0 0 0 0 6h.8M10 4.600v11M8.400 4.600h6"/></g></svg>
<svg class="ic" style="left:1173.5px;top:306.0px;" width="20" height="20" viewBox="0 0 20 20"><g stroke="#a6a6a6"><path d="M5.600 12.400l4.400-8.400l4.400 8.400M7.200 9.600h5.600M4.600 15.400c3.400-2 7.400-2 10.800 0"/></g></svg>
<svg class="ic" style="left:1173.5px;top:334.5px;" width="20" height="20" viewBox="0 0 20 20"><g stroke="#a6a6a6"><path d="M14.600 9v-4.600h-9.800v9.600h4M4.800 7.600h9.800M7 10.200h4"/><path d="M10.400 11.600h6l-2.200 2.600v2.400l-1.600-.8v-1.600z"/></g></svg>
<div class="a" style="left:0px;top:723px;width:1200px;height:27px;background:#404040"></div>
<svg style="left:13px;top:731px" width="12" height="12"><path d="M8 1.500L3.500 6L8 10.500" fill="none" stroke="#8a8a8a" stroke-width="1.100" stroke-linecap="round" stroke-linejoin="round"/></svg>
<svg style="left:35px;top:731px" width="12" height="12"><path d="M4 1.500L8.500 6L4 10.500" fill="none" stroke="#8a8a8a" stroke-width="1.100" stroke-linecap="round" stroke-linejoin="round"/></svg>
<div class="a" style="left:60.5px;top:723px;width:1px;height:27px;background:#333"></div>
<svg style="left:71px;top:730.500px" width="12" height="12"><path d="M6 0.800v10.400M0.800 6h10.400" fill="none" stroke="#e6e6e6" stroke-width="1.200" stroke-linecap="round"/></svg>
<div class="a" style="left:92px;top:731.5px;width:11.5px;height:1.1px;background:#e0e0e0"></div>
<div class="a" style="left:92px;top:734.6px;width:11.5px;height:1.1px;background:#e0e0e0"></div>
<div class="a" style="left:92px;top:737.7px;width:11.5px;height:1.1px;background:#e0e0e0"></div>
<div class="a" style="left:92px;top:740.8px;width:11.5px;height:1.1px;background:#e0e0e0"></div>
<div class="a" style="left:114.5px;top:723px;width:71.5px;height:27px;background:#4a4a4a"></div>
<div class="a" style="left:114.5px;top:723px;width:71.5px;height:3px;background:#56b392"></div>
<div class="a ui" style="left:123.3px;top:731.2px;font-size:9.35px;line-height:13px;color:#f4f4f4;font-weight:bold;">Sales report</div>
<div class="a ui" style="left:544px;top:731.2px;font-size:9.2px;line-height:13px;color:#f4f4f4;">All changes saved</div>
<div class="a" style="left:959.5px;top:723px;width:1px;height:27px;background:#333"></div>
<div class="a ui" style="left:969px;top:731.2px;font-size:9.2px;line-height:13px;color:#f4f4f4;">17 of 21 records filtered</div>
<div class="a" style="left:1076px;top:723px;width:1px;height:27px;background:#333"></div>
<div class="a" style="left:1089px;top:736.5px;width:10.5px;height:1.2px;background:#e0e0e0"></div>
<div class="a ui" style="left:1113.3px;top:731.2px;font-size:9.2px;line-height:13px;color:#f4f4f4;">Zoom 100%</div>
<svg style="left:1176px;top:731px" width="12" height="12"><path d="M6 0.800v10.400M0.800 6h10.400" fill="none" stroke="#e6e6e6" stroke-width="1.200" stroke-linecap="round"/></svg>
</div></body></html>
